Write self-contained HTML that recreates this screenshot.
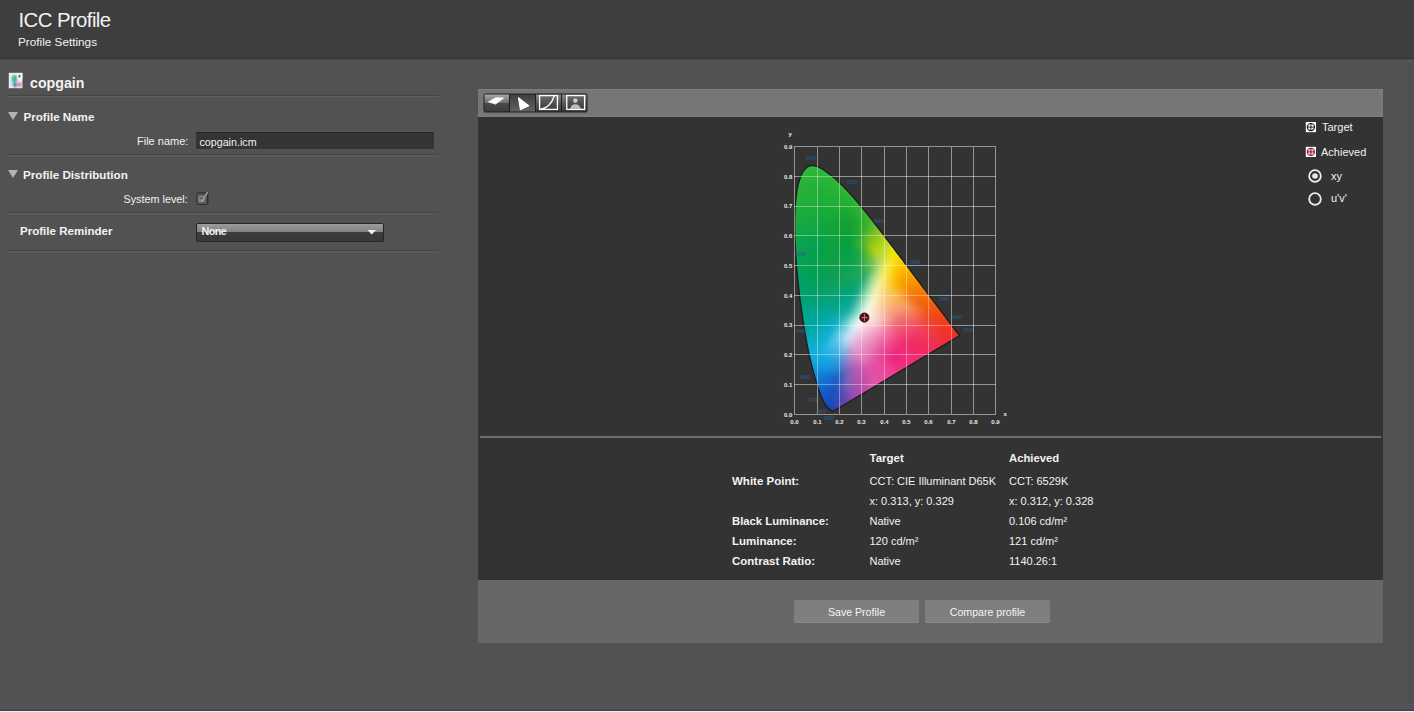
<!DOCTYPE html>
<html><head><meta charset="utf-8">
<style>
*{margin:0;padding:0;box-sizing:border-box}
html,body{width:1414px;height:712px;overflow:hidden;background:#525252;font-family:"Liberation Sans",sans-serif;color:#f2f2f2}
.a{position:absolute;white-space:nowrap;line-height:1}
.b{font-weight:bold}
#hdr{position:absolute;left:0;top:0;width:1414px;height:59px;background:#3e3e3e;border-bottom:2px solid #3a3a3a}
#band{position:absolute;left:0;top:59px;width:1414px;height:3px;background:#545454;border-top:1px solid #4a4a4a}
.sep{position:absolute;left:8px;width:431px;height:2px;border-top:1px solid #444;border-bottom:1px solid #5f5f5f}
.tri{position:absolute;width:0;height:0;border-left:5px solid transparent;border-right:5px solid transparent;border-top:8px solid #b4b4b4}
#panel{position:absolute;left:478px;top:89px;width:905px;height:554px;background:#333}
#tbar{position:absolute;left:478px;top:89px;width:905px;height:28px;background:#767676;box-shadow:inset 0 1px 0 #7e7e7e,inset 0 -2px 0 #7c7c7c,inset -3px 0 0 #7a7a7a}
#bot{position:absolute;left:478px;top:580px;width:905px;height:63px;background:#676767}
.btn{position:absolute;top:600px;height:23px;width:125px;background:#7f7f7f;border-radius:2px;font-size:10.6px;color:#f4f4f4;text-align:center;line-height:25px;border-bottom:1px solid #8a8a8a}
#cie i{position:absolute;display:block;height:1px}
</style></head><body>
<div id="hdr"></div><div id="band"></div>
<div class="a" style="left:18.5px;top:9.8px;font-size:20.4px;letter-spacing:-0.6px">ICC Profile</div>
<div class="a" style="left:18px;top:36.3px;font-size:11.75px">Profile Settings</div>

<!-- left panel -->
<div class="a b" style="left:30px;top:76px;font-size:14.2px">copgain</div>
<div class="sep" style="top:95px"></div>
<div class="tri" style="left:8px;top:112px"></div>
<div class="a b" style="left:23.5px;top:110.6px;font-size:11.6px">Profile Name</div>
<div class="a" style="left:137px;top:136.4px;font-size:11px">File name:</div>
<div style="position:absolute;left:196px;top:132px;width:238px;height:17px;background:#343434;border-radius:1px;border-top:1px solid #262626"></div>
<div class="a" style="left:199.5px;top:136.6px;font-size:10.7px">copgain.icm</div>
<div class="sep" style="top:154px"></div>
<div class="tri" style="left:8px;top:170px"></div>
<div class="a b" style="left:23px;top:169.1px;font-size:11.65px">Profile Distribution</div>
<div class="a" style="left:123.5px;top:193.9px;font-size:10.8px">System level:</div>
<div style="position:absolute;left:197px;top:192px;width:12px;height:13px;background:#444;border-radius:2px"></div>
<div class="sep" style="top:212px"></div>
<div class="a b" style="left:20px;top:225.8px;font-size:11.55px">Profile Reminder</div>
<div style="position:absolute;left:196px;top:223px;width:188px;height:19px;border-radius:2px;background:linear-gradient(#9c9c9c,#828282 46%,#3c3c3c 46%,#383838);border:1px solid #262626"></div>
<div class="a b" style="left:201.5px;top:225.8px;font-size:10.8px;letter-spacing:-0.55px">None</div>
<div class="sep" style="top:250px"></div>

<div style="position:absolute;left:1408px;top:62px;width:6px;height:650px;background:#4f5056"></div>
<div style="position:absolute;left:0;top:704px;width:1414px;height:8px;background:linear-gradient(#55565b 0 1px,#4a4b50 1px 2px,#56575c 2px 3px,#4c4d52 3px 4px,#5a5b60 4px 5px,#46474c 5px 7px,#eeeef2 7px 8px)"></div>

<!-- right panel -->
<div id="panel"></div>
<div id="tbar"></div>
<div style="position:absolute;left:480px;top:436px;width:901px;height:2px;background:#6c6c6c"></div>
<div id="bot"></div>
<div class="btn" style="left:794px">Save Profile</div>
<div class="btn" style="left:925px">Compare profile</div>

<!-- table -->
<div class="a b" style="left:869.5px;top:453.4px;font-size:11.5px">Target</div>
<div class="a b" style="left:1009px;top:453.4px;font-size:11.3px">Achieved</div>
<div class="a b" style="left:732px;top:476.3px;font-size:11.5px">White Point:</div>
<div class="a" style="left:869.5px;top:475.7px;font-size:11px">CCT: CIE Illuminant D65K</div>
<div class="a" style="left:1009px;top:475.7px;font-size:11px">CCT: 6529K</div>
<div class="a" style="left:869.5px;top:495.7px;font-size:11px">x: 0.313, y: 0.329</div>
<div class="a" style="left:1009px;top:495.7px;font-size:11px">x: 0.312, y: 0.328</div>
<div class="a b" style="left:732px;top:516.2px;font-size:11.3px">Black Luminance:</div>
<div class="a" style="left:869.5px;top:515.7px;font-size:11px">Native</div>
<div class="a" style="left:1009px;top:515.7px;font-size:11px">0.106 cd/m²</div>
<div class="a b" style="left:732px;top:536.4px;font-size:11.5px">Luminance:</div>
<div class="a" style="left:869.5px;top:535.7px;font-size:11px">120 cd/m²</div>
<div class="a" style="left:1009px;top:535.7px;font-size:11px">121 cd/m²</div>
<div class="a b" style="left:732px;top:556.2px;font-size:11.5px">Contrast Ratio:</div>
<div class="a" style="left:869.5px;top:555.7px;font-size:11px">Native</div>
<div class="a" style="left:1009px;top:555.7px;font-size:11px">1140.26:1</div>

<!-- legend -->
<div class="a" style="left:1322px;top:122px;font-size:11px">Target</div>
<div class="a" style="left:1321px;top:147px;font-size:11px">Achieved</div>
<div class="a" style="left:1331px;top:171px;font-size:11px">xy</div>
<div class="a" style="left:1331px;top:193px;font-size:11px">u'v'</div>


<!--ICONS-->
<svg style="position:absolute;left:0;top:0" width="1414" height="712">
<defs>
<linearGradient id="doc" x1="0" y1="0" x2="1" y2="1"><stop offset="0" stop-color="#b0f0c8"/><stop offset="0.45" stop-color="#40c0a0"/><stop offset="0.7" stop-color="#3070c0"/><stop offset="1" stop-color="#f0a0d0"/></linearGradient>
<linearGradient id="tb1" x1="0" y1="0" x2="0" y2="1"><stop offset="0" stop-color="#a8a8a8"/><stop offset="0.5" stop-color="#6c6c6c"/><stop offset="0.5" stop-color="#4a4a4a"/><stop offset="1" stop-color="#3c3c3c"/></linearGradient>
<linearGradient id="tb2" x1="0" y1="0" x2="0" y2="1"><stop offset="0" stop-color="#3e3e3e"/><stop offset="1" stop-color="#606060"/></linearGradient>
<linearGradient id="tb3" x1="0" y1="0" x2="0" y2="1"><stop offset="0" stop-color="#8a8a8a"/><stop offset="0.5" stop-color="#5a5a5a"/><stop offset="1" stop-color="#3a3a3a"/></linearGradient>
<linearGradient id="in3" x1="0" y1="0" x2="0" y2="1"><stop offset="0" stop-color="#6a6a6a"/><stop offset="1" stop-color="#3a3a3a"/></linearGradient>
</defs>
<!-- doc icon -->
<filter id="bl" x="-50%" y="-50%" width="200%" height="200%"><feGaussianBlur stdDeviation="1.2"/></filter>
<rect x="8.8" y="72.8" width="13.6" height="15.4" fill="#f2f2f2"/>
<g filter="url(#bl)">
<ellipse cx="14.5" cy="79" rx="3" ry="4" fill="#40c080"/>
<ellipse cx="15" cy="85" rx="2" ry="2.2" fill="#3070c0"/>
<ellipse cx="19.5" cy="84.5" rx="2.2" ry="2.5" fill="#e070b0"/>
<ellipse cx="11.5" cy="83.5" rx="1.5" ry="2.5" fill="#b0e0f0"/>
</g>
<path d="M17.2 73 L22.4 73 L22.4 79.2 L17.2 79.2 Z" fill="#f6f6f6"/>
<path d="M18 76.2 L20.8 76.2 M19.4 74.5 L19.4 78" stroke="#606060" stroke-width="0.9"/>
<!-- toolbar group -->
<rect x="483.5" y="93.5" width="104" height="19" rx="2" fill="#1e1e1e"/>
<rect x="484.5" y="94.5" width="24.5" height="17" fill="url(#tb1)"/>
<rect x="510" y="94.5" width="25" height="17" fill="url(#tb2)"/>
<rect x="536" y="94.5" width="25" height="17" fill="url(#tb3)"/>
<rect x="562" y="94.5" width="24.5" height="17" fill="url(#tb3)"/>
<path d="M488.5 101.9 L495.8 97.7 L503.6 98.1 L495.6 104.1 Z" fill="#fff" stroke="#fff" stroke-width="0.8" stroke-linejoin="round"/>
<path d="M518.4 97.5 L529.1 105.8 L520.4 109.8 Z" fill="#fff" stroke="#fff" stroke-width="1" stroke-linejoin="round"/>
<rect x="539.6" y="95.6" width="17.8" height="13.8" fill="url(#in3)" stroke="#fff" stroke-width="1.3"/>
<path d="M540 109.3 Q550 108.5 554.5 95.5" stroke="#fff" stroke-width="1.3" fill="none"/>
<rect x="566.8" y="95.6" width="17.8" height="13.8" fill="url(#in3)" stroke="#fff" stroke-width="1.3"/>
<circle cx="575.3" cy="100.6" r="2.3" fill="#c8c8c8"/>
<path d="M570 109 Q571 104.5 575.3 104.3 Q579.6 104.5 581 109 Z" fill="#bdbdbd"/>
<!-- legend icons -->
<rect x="1305.8" y="122" width="10.2" height="10.2" fill="#fff"/>
<circle cx="1310.9" cy="127.1" r="3.6" fill="#fff" stroke="#111" stroke-width="1.1"/>
<path d="M1310.9 123.4 V130.8 M1307.2 127.1 H1314.6" stroke="#111" stroke-width="0.9"/>
<rect x="1305.8" y="146.8" width="10.2" height="10.2" fill="#fff"/>
<circle cx="1310.9" cy="151.9" r="3.6" fill="#f4c8d8" stroke="#901830" stroke-width="1.1"/>
<path d="M1310.9 148.2 V155.6 M1307.2 151.9 H1314.6" stroke="#801028" stroke-width="0.9"/>
<!-- radios -->
<circle cx="1315" cy="176" r="5.8" fill="none" stroke="#eee" stroke-width="1.8"/>
<circle cx="1315" cy="176" r="2.8" fill="#e8e8e8"/>
<circle cx="1315" cy="199" r="5.8" fill="none" stroke="#eee" stroke-width="1.8"/>
<!-- checkbox -->
<rect x="196.8" y="193.2" width="10.6" height="11.2" rx="1" fill="#5c5c5c" stroke="#2c2c2c" stroke-width="1"/>
<circle cx="201.5" cy="199" r="2.6" fill="none" stroke="#8c8c8c" stroke-width="1.2"/>
<path d="M200.5 199.5 L202.5 201 L207.6 192.2" stroke="#a0a0a0" stroke-width="1.5" fill="none"/>
<!-- dropdown arrow -->
<path d="M367.5 230 L376 230 L371.75 234.5 Z" fill="#f0f0f0"/>
</svg>
<!--/ICONS-->
<!--CHART--><svg style="position:absolute;left:0;top:0" width="1414" height="712">
<path d="M833.36 410.58 L833.34 410.58 L833.29 410.61 L833.25 410.61 L833.18 410.64 L833.11 410.64 L833.02 410.64 L832.91 410.64 L832.76 410.55 L832.51 410.34 L832.20 410.35 L831.75 410.18 L831.19 409.83 L830.46 409.30 L829.45 408.44 L828.20 407.25 L826.64 405.47 L826.30 404.99 L825.94 404.46 L825.56 403.86 L825.17 403.19 L824.74 402.43 L824.29 401.58 L823.81 400.63 L823.30 399.57 L822.76 398.40 L822.20 397.11 L821.61 395.70 L820.99 394.14 L820.34 392.44 L819.67 390.56 L818.96 388.49 L818.22 386.21 L817.45 383.72 L816.64 381.00 L815.78 378.04 L814.88 374.84 L813.93 371.36 L812.94 367.62 L811.92 363.59 L810.88 359.26 L809.83 354.61 L808.79 349.64 L807.75 344.35 L806.71 338.74 L805.67 332.81 L804.63 326.57 L803.60 320.02 L802.59 313.20 L801.60 306.16 L800.65 298.93 L799.75 291.56 L798.91 284.10 L798.14 276.58 L797.45 269.06 L796.84 261.58 L796.33 254.18 L795.92 246.91 L795.61 239.79 L795.41 232.84 L795.33 226.09 L795.37 219.56 L795.54 213.27 L795.85 207.26 L796.30 201.55 L796.88 196.18 L797.60 191.19 L798.47 186.61 L799.47 182.45 L800.60 178.76 L801.84 175.53 L803.18 172.81 L804.62 170.60 L806.14 168.88 L807.74 167.61 L809.39 166.77 L811.08 166.33 L812.82 166.24 L814.58 166.47 L816.37 166.97 L818.17 167.69 L819.99 168.59 L821.81 169.62 L823.64 170.76 L825.45 171.98 L827.25 173.28 L829.03 174.63 L830.78 176.00 L832.50 177.42 L834.21 178.86 L835.89 180.34 L837.56 181.85 L839.21 183.40 L840.85 184.99 L842.49 186.62 L844.12 188.28 L845.75 189.97 L847.37 191.70 L848.99 193.45 L850.61 195.24 L852.22 197.05 L853.83 198.89 L855.43 200.76 L857.03 202.64 L858.63 204.54 L860.22 206.47 L861.82 208.41 L863.41 210.37 L865.00 212.34 L866.60 214.33 L868.19 216.33 L869.79 218.34 L871.38 220.37 L872.98 222.41 L874.58 224.45 L876.18 226.51 L877.78 228.57 L879.37 230.64 L880.96 232.72 L882.55 234.79 L884.14 236.87 L885.72 238.95 L887.31 241.03 L888.89 243.11 L890.47 245.19 L892.05 247.26 L893.62 249.33 L895.19 251.40 L896.74 253.46 L898.29 255.51 L899.84 257.56 L901.37 259.59 L902.89 261.62 L904.41 263.63 L905.91 265.63 L907.41 267.61 L908.89 269.59 L910.36 271.54 L911.82 273.48 L913.26 275.39 L914.69 277.29 L916.10 279.16 L917.49 281.01 L918.87 282.83 L920.23 284.63 L921.57 286.40 L922.88 288.14 L924.18 289.86 L925.45 291.55 L926.69 293.21 L927.89 294.82 L929.07 296.38 L930.20 297.89 L931.31 299.36 L932.38 300.78 L933.43 302.16 L934.45 303.52 L935.45 304.85 L936.42 306.14 L937.37 307.40 L938.29 308.62 L939.18 309.79 L940.03 310.92 L940.85 311.99 L941.63 313.02 L942.38 314.01 L943.11 314.97 L943.80 315.89 L944.47 316.77 L945.10 317.62 L945.71 318.44 L946.30 319.22 L946.86 319.97 L947.39 320.68 L947.89 321.35 L948.38 322.00 L948.84 322.61 L949.29 323.20 L949.71 323.76 L950.12 324.29 L950.50 324.80 L950.87 325.29 L951.23 325.76 L951.57 326.21 L951.89 326.64 L952.20 327.06 L952.50 327.46 L952.79 327.85 L953.08 328.22 L953.35 328.59 L953.61 328.94 L953.86 329.27 L954.11 329.60 L954.34 329.91 L954.56 330.21 L954.78 330.49 L954.98 330.76 L955.87 331.92 L956.54 332.81 L957.06 333.50 L957.44 334.00 L957.68 334.33 L957.88 334.60 L958.04 334.80 L958.19 335.01 L958.33 335.19 L958.42 335.31 L958.46 335.37 L958.49 335.40 Z" fill="#1b1b1b" stroke="#1b1b1b" stroke-width="2.4" stroke-linejoin="round"/>
<g stroke="#ffffff" stroke-opacity="0.48" stroke-width="1" shape-rendering="crispEdges"><line x1="794.50" y1="146.64" x2="794.50" y2="414.30"/><line x1="794" y1="414.30" x2="996" y2="414.30"/><line x1="817.50" y1="146.64" x2="817.50" y2="414.30"/><line x1="794" y1="384.56" x2="996" y2="384.56"/><line x1="839.50" y1="146.64" x2="839.50" y2="414.30"/><line x1="794" y1="354.82" x2="996" y2="354.82"/><line x1="861.50" y1="146.64" x2="861.50" y2="414.30"/><line x1="794" y1="325.08" x2="996" y2="325.08"/><line x1="884.50" y1="146.64" x2="884.50" y2="414.30"/><line x1="794" y1="295.34" x2="996" y2="295.34"/><line x1="906.50" y1="146.64" x2="906.50" y2="414.30"/><line x1="794" y1="265.60" x2="996" y2="265.60"/><line x1="928.50" y1="146.64" x2="928.50" y2="414.30"/><line x1="794" y1="235.86" x2="996" y2="235.86"/><line x1="951.50" y1="146.64" x2="951.50" y2="414.30"/><line x1="794" y1="206.12" x2="996" y2="206.12"/><line x1="973.50" y1="146.64" x2="973.50" y2="414.30"/><line x1="794" y1="176.38" x2="996" y2="176.38"/><line x1="995.50" y1="146.64" x2="995.50" y2="414.30"/><line x1="794" y1="146.64" x2="996" y2="146.64"/></g>
</svg>
<div id="cie" style="position:absolute;left:780px;top:150px;width:230px;height:280px;clip-path:path('M53.36 260.58 L53.34 260.58 L53.29 260.61 L53.25 260.61 L53.18 260.64 L53.11 260.64 L53.02 260.64 L52.91 260.64 L52.76 260.55 L52.51 260.34 L52.20 260.35 L51.75 260.18 L51.19 259.83 L50.46 259.30 L49.45 258.44 L48.20 257.25 L46.64 255.47 L46.30 254.99 L45.94 254.46 L45.56 253.86 L45.17 253.19 L44.74 252.43 L44.29 251.58 L43.81 250.63 L43.30 249.57 L42.76 248.40 L42.20 247.11 L41.61 245.70 L40.99 244.14 L40.34 242.44 L39.67 240.56 L38.96 238.49 L38.22 236.21 L37.45 233.72 L36.64 231.00 L35.78 228.04 L34.88 224.84 L33.93 221.36 L32.94 217.62 L31.92 213.59 L30.88 209.26 L29.83 204.61 L28.79 199.64 L27.75 194.35 L26.71 188.74 L25.67 182.81 L24.63 176.57 L23.60 170.02 L22.59 163.20 L21.60 156.16 L20.65 148.93 L19.75 141.56 L18.91 134.10 L18.14 126.58 L17.45 119.06 L16.84 111.58 L16.33 104.18 L15.92 96.91 L15.61 89.79 L15.41 82.84 L15.33 76.09 L15.37 69.56 L15.54 63.27 L15.85 57.26 L16.30 51.55 L16.88 46.18 L17.60 41.19 L18.47 36.61 L19.47 32.45 L20.60 28.76 L21.84 25.53 L23.18 22.81 L24.62 20.60 L26.14 18.88 L27.74 17.61 L29.39 16.77 L31.08 16.33 L32.82 16.24 L34.58 16.47 L36.37 16.97 L38.17 17.69 L39.99 18.59 L41.81 19.62 L43.64 20.76 L45.45 21.98 L47.25 23.28 L49.03 24.63 L50.78 26.00 L52.50 27.42 L54.21 28.86 L55.89 30.34 L57.56 31.85 L59.21 33.40 L60.85 34.99 L62.49 36.62 L64.12 38.28 L65.75 39.97 L67.37 41.70 L68.99 43.45 L70.61 45.24 L72.22 47.05 L73.83 48.89 L75.43 50.76 L77.03 52.64 L78.63 54.54 L80.22 56.47 L81.82 58.41 L83.41 60.37 L85.00 62.34 L86.60 64.33 L88.19 66.33 L89.79 68.34 L91.38 70.37 L92.98 72.41 L94.58 74.45 L96.18 76.51 L97.78 78.57 L99.37 80.64 L100.96 82.72 L102.55 84.79 L104.14 86.87 L105.72 88.95 L107.31 91.03 L108.89 93.11 L110.47 95.19 L112.05 97.26 L113.62 99.33 L115.19 101.40 L116.74 103.46 L118.29 105.51 L119.84 107.56 L121.37 109.59 L122.89 111.62 L124.41 113.63 L125.91 115.63 L127.41 117.61 L128.89 119.59 L130.36 121.54 L131.82 123.48 L133.26 125.39 L134.69 127.29 L136.10 129.16 L137.49 131.01 L138.87 132.83 L140.23 134.63 L141.57 136.40 L142.88 138.14 L144.18 139.86 L145.45 141.55 L146.69 143.21 L147.89 144.82 L149.07 146.38 L150.20 147.89 L151.31 149.36 L152.38 150.78 L153.43 152.16 L154.45 153.52 L155.45 154.85 L156.42 156.14 L157.37 157.40 L158.29 158.62 L159.18 159.79 L160.03 160.92 L160.85 161.99 L161.63 163.02 L162.38 164.01 L163.11 164.97 L163.80 165.89 L164.47 166.77 L165.10 167.62 L165.71 168.44 L166.30 169.22 L166.86 169.97 L167.39 170.68 L167.89 171.35 L168.38 172.00 L168.84 172.61 L169.29 173.20 L169.71 173.76 L170.12 174.29 L170.50 174.80 L170.87 175.29 L171.23 175.76 L171.57 176.21 L171.89 176.64 L172.20 177.06 L172.50 177.46 L172.79 177.85 L173.08 178.22 L173.35 178.59 L173.61 178.94 L173.86 179.27 L174.11 179.60 L174.34 179.91 L174.56 180.21 L174.78 180.49 L174.98 180.76 L175.87 181.92 L176.54 182.81 L177.06 183.50 L177.44 184.00 L177.68 184.33 L177.88 184.60 L178.04 184.80 L178.19 185.01 L178.33 185.19 L178.42 185.31 L178.46 185.37 L178.49 185.40 Z')"><i style="left:27px;top:16px;width:11px;background:linear-gradient(90deg,#2fb738,#2fb838,#2fb838,#2fb838,#2fb838)"></i><i style="left:26px;top:17px;width:14px;background:linear-gradient(90deg,#2fb738,#2fb738,#2fb738,#2fb738,#2fb838,#2fb838)"></i><i style="left:25px;top:18px;width:17px;background:linear-gradient(90deg,#2fb738,#2fb738,#2fb738,#2eb738,#2fb738,#2fb738,#2fb838)"></i><i style="left:24px;top:19px;width:20px;background:linear-gradient(90deg,#2eb738,#2eb738,#2eb738,#2eb738,#2eb738,#2eb738,#2fb738,#2fb738)"></i><i style="left:23px;top:20px;width:22px;background:linear-gradient(90deg,#2eb638,#2eb638,#2eb738,#2db738,#2db738,#2eb738,#2eb738,#2fb738)"></i><i style="left:22px;top:21px;width:25px;background:linear-gradient(90deg,#2eb638,#2eb638,#2db638,#2db638,#2db638,#2db638,#2db738,#2eb738,#2fb737)"></i><i style="left:22px;top:22px;width:26px;background:linear-gradient(90deg,#2eb638,#2db638,#2db638,#2cb638,#2cb638,#2cb638,#2cb638,#2db738,#2eb738,#2eb737)"></i><i style="left:21px;top:23px;width:29px;background:linear-gradient(90deg,#2db639,#2db638,#2db638,#2cb638,#2cb638,#2bb638,#2cb638,#2cb638,#2db738,#2eb738,#2eb737)"></i><i style="left:21px;top:24px;width:30px;background:linear-gradient(90deg,#2db539,#2cb538,#2cb538,#2bb538,#2bb538,#2bb538,#2bb638,#2cb638,#2db638,#2eb738,#2eb737)"></i><i style="left:20px;top:25px;width:32px;background:linear-gradient(90deg,#2db539,#2cb539,#2cb538,#2bb538,#2bb538,#2ab538,#2ab538,#2bb538,#2bb638,#2db638,#2eb738,#2eb737)"></i><i style="left:20px;top:26px;width:33px;background:linear-gradient(90deg,#2cb539,#2cb439,#2bb538,#2ab538,#2ab538,#2ab538,#2ab538,#2ab538,#2bb638,#2cb638,#2eb738,#2eb737)"></i><i style="left:19px;top:27px;width:36px;background:linear-gradient(90deg,#2cb439,#2bb439,#2bb439,#2ab438,#2ab438,#29b438,#29b438,#29b538,#2ab538,#2bb638,#2db638,#2eb738,#2fb737)"></i><i style="left:19px;top:28px;width:37px;background:linear-gradient(90deg,#2cb439,#2bb439,#2ab439,#29b438,#29b438,#28b438,#28b438,#29b438,#2ab538,#2bb638,#2db638,#2eb738,#2fb738)"></i><i style="left:19px;top:29px;width:38px;background:linear-gradient(90deg,#2bb439,#2ab339,#2ab339,#29b439,#28b438,#28b438,#28b438,#28b438,#29b438,#2ab538,#2bb638,#2db638,#2eb738,#2fb738)"></i><i style="left:18px;top:30px;width:40px;background:linear-gradient(90deg,#2bb339,#2ab339,#29b339,#29b339,#28b338,#27b338,#27b338,#27b438,#28b438,#29b538,#2bb538,#2cb638,#2eb738,#2fb738)"></i><i style="left:18px;top:31px;width:41px;background:linear-gradient(90deg,#2bb339,#2ab239,#29b239,#28b339,#28b338,#27b338,#27b338,#26b338,#27b338,#28b438,#29b538,#2bb538,#2cb638,#2eb738,#2eb737)"></i><i style="left:18px;top:32px;width:42px;background:linear-gradient(90deg,#2bb339,#29b239,#28b239,#28b239,#27b239,#26b338,#26b338,#26b338,#26b338,#28b438,#29b538,#2bb538,#2cb638,#2eb738,#2eb737)"></i><i style="left:18px;top:33px;width:43px;background:linear-gradient(90deg,#2ab239,#29b239,#28b139,#27b239,#26b239,#26b238,#25b238,#25b338,#26b338,#27b438,#29b438,#2bb538,#2cb638,#2eb738,#2eb637)"></i><i style="left:17px;top:34px;width:45px;background:linear-gradient(90deg,#2ab239,#29b13a,#28b139,#27b139,#26b239,#25b238,#25b238,#25b238,#25b238,#26b338,#27b438,#29b438,#2bb538,#2cb638,#2eb637,#2eb637)"></i><i style="left:17px;top:35px;width:46px;background:linear-gradient(90deg,#2ab23a,#29b13a,#27b13a,#26b139,#26b139,#25b139,#24b238,#24b238,#24b238,#26b338,#27b438,#29b438,#2ab538,#2cb637,#2db637,#2eb637)"></i><i style="left:17px;top:36px;width:47px;background:linear-gradient(90deg,#29b23a,#28b13a,#27b03a,#26b139,#25b139,#25b139,#24b138,#23b138,#23b238,#24b238,#26b338,#27b438,#29b438,#2bb537,#2cb637,#2db637,#2eb637)"></i><i style="left:17px;top:37px;width:48px;background:linear-gradient(90deg,#29b13a,#28b13a,#27b03a,#26b039,#25b039,#24b139,#23b138,#23b138,#23b138,#24b238,#25b338,#27b338,#29b437,#2ab537,#2cb536,#2db636,#2eb636)"></i><i style="left:17px;top:38px;width:49px;background:linear-gradient(90deg,#29b13a,#28b03a,#26b03a,#25b039,#25b039,#24b039,#23b138,#22b138,#22b138,#24b238,#25b238,#27b337,#28b437,#2ab436,#2cb536,#2db536,#2eb536)"></i><i style="left:16px;top:39px;width:51px;background:linear-gradient(90deg,#29b13a,#28b03a,#27b03a,#26b03a,#25b039,#24b039,#23b039,#22b038,#22b138,#22b138,#24b237,#25b237,#27b337,#28b336,#2ab436,#2cb435,#2db536,#2eb536)"></i><i style="left:16px;top:40px;width:52px;background:linear-gradient(90deg,#29b13a,#28b03a,#26b03a,#25b03a,#24b039,#23b039,#22b039,#22b038,#21b038,#22b138,#23b137,#25b237,#27b236,#28b335,#2ab335,#2bb435,#2db535,#2eb536)"></i><i style="left:16px;top:41px;width:53px;background:linear-gradient(90deg,#29b13a,#28b03a,#26b03a,#25b03a,#24b039,#23b039,#22b039,#21b038,#21b038,#21b038,#22b137,#24b137,#25b236,#27b235,#28b235,#2ab334,#2cb434,#2db535,#2eb536)"></i><i style="left:16px;top:42px;width:54px;background:linear-gradient(90deg,#28b13a,#27b03a,#26b03a,#25b03a,#24b039,#23b039,#22b039,#21b038,#20b038,#21b038,#22b037,#23b136,#25b135,#26b235,#28b234,#2ab334,#2bb434,#2db535,#2eb536)"></i><i style="left:16px;top:43px;width:55px;background:linear-gradient(90deg,#28b03a,#27b03a,#26b03a,#25b03a,#24b039,#23b039,#21b039,#20b039,#20b038,#20b038,#22b037,#23b036,#25b135,#26b134,#28b233,#29b233,#2bb334,#2db535,#2eb636)"></i><i style="left:16px;top:44px;width:56px;background:linear-gradient(90deg,#28b03a,#27b03a,#26b03a,#25b03a,#24b039,#22af39,#21af39,#20af39,#1faf39,#1faf38,#21b037,#22b036,#23b035,#25b034,#26b133,#28b133,#2ab233,#2bb334,#2db535,#2eb636)"></i><i style="left:15px;top:45px;width:58px;background:linear-gradient(90deg,#28b03a,#27b03a,#26b03a,#25b03a,#23af39,#22af39,#21af39,#20af39,#1faf39,#1faf38,#20af37,#22af36,#23b035,#24b034,#26b033,#28b132,#29b232,#2bb334,#2db535,#2fb636)"></i><i style="left:15px;top:46px;width:59px;background:linear-gradient(90deg,#27b03a,#27b03a,#26af3a,#24af3a,#23af39,#22af39,#21af39,#1faf39,#1faf39,#1eaf39,#1faf38,#20af37,#22af36,#23b034,#25b033,#26b032,#28b132,#29b232,#2bb434,#2db535,#2fb636)"></i><i style="left:15px;top:47px;width:60px;background:linear-gradient(90deg,#27b03a,#26af3a,#25af3a,#24af3a,#23af39,#21af39,#20af39,#1faf39,#1eaf39,#1eaf39,#1faf38,#20af37,#22af35,#23af34,#25b033,#26b032,#27b032,#29b232,#2bb334,#2db535,#30b636)"></i><i style="left:15px;top:48px;width:60px;background:linear-gradient(90deg,#27af3b,#26af3a,#25af3a,#23af3a,#22af39,#21af39,#20ae39,#1eae39,#1dae39,#1dae39,#1eae38,#20af37,#21af36,#23af34,#24af33,#25af32,#27b031,#28b132,#2bb333,#2db535,#2fb636)"></i><i style="left:15px;top:49px;width:61px;background:linear-gradient(90deg,#27af3b,#26af3a,#24af3a,#23af3a,#21ae39,#20ae39,#1fae39,#1eae3a,#1dae3a,#1dae39,#1eae38,#20ae37,#21af36,#22af34,#24af33,#25af32,#26af31,#28b132,#2ab334,#2db535,#30b636)"></i><i style="left:15px;top:50px;width:62px;background:linear-gradient(90deg,#26af3b,#25af3a,#24af3a,#22ae3a,#21ae39,#20ae39,#1fae39,#1eae3a,#1dae3a,#1cae3a,#1dae39,#1fae38,#20ae36,#21af35,#23af34,#24af33,#25af32,#26af31,#28b132,#2bb334,#2db536,#30b636)"></i><i style="left:15px;top:51px;width:63px;background:linear-gradient(90deg,#26af3b,#25af3a,#23ae3a,#22ae3a,#20ae39,#1fae39,#1eae3a,#1dae3a,#1cae3a,#1cae3a,#1dae39,#1eae38,#20ae36,#21ae35,#22ae34,#23ae33,#24ae31,#26af31,#28b133,#2bb334,#2db536,#31b636)"></i><i style="left:15px;top:52px;width:64px;background:linear-gradient(90deg,#25af3b,#24ae3a,#23ae3a,#21ae3a,#20ae3a,#1fae3a,#1dad3a,#1cad3a,#1cad3a,#1cad3a,#1dae39,#1eae38,#20ae36,#21ae35,#22ae34,#23ae32,#24ae31,#25af32,#28b133,#2ab335,#2eb536,#32b535)"></i><i style="left:15px;top:53px;width:65px;background:linear-gradient(90deg,#25ae3b,#23ae3a,#22ae3a,#21ae3a,#1fad3a,#1ead3a,#1dad3a,#1cad3a,#1bad3b,#1bad3a,#1cad39,#1dad38,#1fae37,#20ae36,#21ae35,#22ae33,#22ad32,#23ad31,#25af32,#28b134,#2bb335,#2eb536,#33b535)"></i><i style="left:15px;top:54px;width:65px;background:linear-gradient(90deg,#24ae3b,#23ae3a,#21ad3a,#20ad3a,#1fad3a,#1ead3a,#1dad3a,#1cad3b,#1bad3b,#1bad3b,#1bad3a,#1dad39,#1ead37,#1fae36,#21ae35,#21ad33,#22ad32,#22ad31,#24ae32,#27b033,#2ab335,#2db436,#33b535)"></i><i style="left:14px;top:55px;width:67px;background:linear-gradient(90deg,#24ad3c,#23ad3b,#21ad3a,#20ad3a,#1fad3a,#1ead3a,#1cad3b,#1bad3b,#1aad3b,#1aad3b,#1bad3a,#1cad39,#1ead38,#1fad36,#20ad35,#21ad33,#21ac32,#22ac31,#24ae32,#26b034,#2ab235,#2eb436,#34b535)"></i><i style="left:14px;top:56px;width:68px;background:linear-gradient(90deg,#23ad3d,#22ad3b,#21ad3a,#20ad3a,#1ead3a,#1dad3a,#1cad3b,#1bac3b,#1aac3b,#1aac3b,#1aad3a,#1bad39,#1dad38,#1ead37,#1fad36,#20ad34,#20ac33,#20ab31,#22ac31,#24ae33,#27b034,#2ab335,#2fb435,#36b534)"></i><i style="left:14px;top:57px;width:69px;background:linear-gradient(90deg,#22ad3d,#22ad3b,#20ad3a,#1fad3a,#1eac3a,#1dac3b,#1cac3b,#1aac3b,#19ac3b,#19ac3b,#1aac3b,#1bac39,#1cad38,#1ead37,#1fac35,#1fac34,#1fab32,#20ab31,#21ac32,#24ae33,#27b035,#2bb235,#30b435,#37b534)"></i><i style="left:14px;top:58px;width:70px;background:linear-gradient(90deg,#22ac3e,#21ac3c,#20ac3a,#1eac3a,#1dac3b,#1cac3b,#1bac3b,#1aac3c,#19ac3c,#19ac3c,#19ac3b,#1bac39,#1cac38,#1dac37,#1eac35,#1eab34,#1eab32,#1faa31,#21ac32,#23ae33,#27b035,#2bb235,#32b335,#39b433)"></i><i style="left:14px;top:59px;width:71px;background:linear-gradient(90deg,#21ac3e,#21ac3c,#1fac3b,#1eac3b,#1dac3b,#1cac3b,#1bac3b,#1aac3c,#19ac3c,#18ac3c,#19ac3b,#1aac3a,#1bac39,#1cac38,#1dac36,#1dab34,#1daa33,#1eaa31,#1faa31,#21ac32,#24ae34,#28b035,#2db235,#33b334,#3bb432)"></i><i style="left:14px;top:60px;width:71px;background:linear-gradient(90deg,#21ac3e,#20ac3c,#1fac3b,#1eac3b,#1cac3b,#1bac3b,#1aac3c,#19ac3c,#18ab3c,#18ab3c,#18ac3b,#19ac3a,#1bac39,#1cac38,#1cab36,#1cab35,#1caa33,#1da932,#1eaa31,#20ab32,#23ae34,#27af34,#2cb134,#33b234,#3bb432)"></i><i style="left:14px;top:61px;width:72px;background:linear-gradient(90deg,#21ac3f,#20ac3d,#1eac3b,#1dac3b,#1cab3b,#1bab3c,#1aab3c,#19ab3c,#18ab3c,#17ab3c,#18ab3c,#19ac3a,#1aac39,#1bab38,#1bab36,#1caa34,#1ca933,#1ca931,#1da931,#20ab33,#23ad34,#28af34,#2db134,#34b233,#3cb432)"></i><i style="left:14px;top:62px;width:73px;background:linear-gradient(90deg,#21ab3f,#1fab3d,#1eab3c,#1dab3c,#1bab3c,#1aab3c,#19ab3c,#18ab3c,#17ab3d,#17ab3c,#18ab3c,#19ab3a,#1aab39,#1aab37,#1baa36,#1ba934,#1ba832,#1ba831,#1da932,#20ab33,#23ad34,#29af34,#2eb034,#35b233,#3fb431)"></i><i style="left:14px;top:63px;width:74px;background:linear-gradient(90deg,#20ab3f,#1fab3e,#1dab3c,#1cab3c,#1bab3c,#1aab3c,#19ab3c,#18ab3d,#17ab3d,#16ab3d,#17ab3c,#18ab3b,#19ab3a,#1aab38,#1aaa37,#1aa935,#1aa833,#1aa832,#1ba831,#1da932,#20ab33,#25ad34,#2aaf33,#30b033,#37b232,#41b430)"></i><i style="left:14px;top:64px;width:75px;background:linear-gradient(90deg,#20ab3f,#1eab3e,#1dab3d,#1cab3d,#1bab3c,#19ab3c,#18ab3d,#17ab3d,#16ab3d,#16ab3d,#16ab3c,#18ab3b,#18ab3a,#19aa38,#19a936,#19a835,#19a733,#19a732,#1aa731,#1da932,#21ab33,#26ad33,#2bae33,#31b033,#39b231,#43b430)"></i><i style="left:14px;top:65px;width:75px;background:linear-gradient(90deg,#1fab40,#1eaa3f,#1daa3e,#1baa3d,#1aaa3d,#19aa3d,#18aa3d,#17aa3d,#16aa3d,#15aa3d,#16aa3c,#17aa3b,#18aa3a,#18a938,#18a936,#18a835,#18a733,#18a632,#19a731,#1ca832,#20aa33,#25ac33,#2aae33,#30b032,#38b231,#43b42f)"></i><i style="left:14px;top:66px;width:76px;background:linear-gradient(90deg,#1faa41,#1daa3f,#1caa3e,#1baa3e,#1aaa3d,#18aa3d,#17aa3d,#16aa3d,#15aa3e,#15aa3d,#16aa3d,#17aa3b,#17aa3a,#17a938,#17a836,#17a735,#17a633,#18a631,#19a631,#1ca832,#20aa33,#26ac32,#2bae32,#31b032,#3ab231,#46b42f)"></i><i style="left:14px;top:67px;width:77px;background:linear-gradient(90deg,#1eaa41,#1daa40,#1caa3f,#1baa3e,#19aa3e,#18aa3e,#17aa3e,#16aa3e,#15aa3e,#14aa3e,#15aa3d,#16aa3c,#16a93a,#16a939,#16a837,#16a735,#16a634,#17a532,#17a531,#19a631,#1da832,#22aa32,#27ac32,#2dae32,#33b031,#3db230,#49b52e)"></i><i style="left:14px;top:68px;width:78px;background:linear-gradient(90deg,#1da942,#1ca941,#1ba940,#1aaa3f,#19aa3f,#18aa3e,#16aa3e,#15aa3e,#14aa3e,#14aa3e,#14aa3d,#15a93c,#15a93a,#16a838,#16a737,#16a635,#16a533,#16a532,#17a531,#19a631,#1ea832,#23aa32,#28ac32,#2eaf31,#35b131,#40b32f,#4eb62d)"></i><i style="left:14px;top:69px;width:79px;background:linear-gradient(90deg,#1da943,#1ca941,#1ba941,#1aa940,#18a93f,#17a93f,#16a93e,#15a93e,#14a93e,#13a93e,#14a93d,#14a93c,#15a83a,#15a738,#15a637,#15a635,#15a533,#15a432,#16a431,#19a631,#1ea832,#24aa31,#29ad31,#2faf31,#37b130,#44b42e,#53b72c)"></i><i style="left:14px;top:70px;width:79px;background:linear-gradient(90deg,#1ca943,#1ca942,#1aa941,#19a941,#18a940,#17a93f,#15a93f,#14a93f,#13a93f,#13a93e,#13a93d,#14a83c,#14a83a,#14a738,#14a637,#14a535,#14a433,#14a432,#15a431,#19a531,#1ea731,#23aa31,#29ac31,#2faf31,#37b130,#44b42e,#55b82c)"></i><i style="left:14px;top:71px;width:80px;background:linear-gradient(90deg,#1ca844,#1ba843,#1aa942,#19a941,#18a941,#16a940,#15a940,#14a93f,#13a93f,#12a93f,#13a93e,#13a83c,#13a73b,#13a739,#13a637,#13a536,#13a434,#13a332,#14a331,#16a431,#1aa631,#20a831,#25aa31,#2bad31,#32af30,#3cb22f,#4ab52d,#5bb92b)"></i><i style="left:14px;top:72px;width:81px;background:linear-gradient(90deg,#1ba844,#1ba844,#1aa843,#18a842,#17a841,#16a841,#15a940,#14a940,#12a93f,#12a93f,#12a83e,#12a83c,#12a73b,#12a639,#12a537,#12a435,#12a334,#12a332,#13a331,#16a431,#1ba631,#21a831,#27ab30,#2dae30,#35b030,#40b32f,#50b72c,#61bb2a)"></i><i style="left:14px;top:73px;width:82px;background:linear-gradient(90deg,#1ba845,#1aa844,#19a843,#18a843,#17a842,#15a841,#14a841,#13a840,#12a840,#11a83f,#11a83e,#12a73c,#12a63a,#12a539,#12a437,#12a435,#12a334,#12a232,#13a231,#17a431,#1ca631,#22a930,#28ab30,#2fae30,#39b12f,#46b42e,#57b92b,#68bd28)"></i><i style="left:14px;top:74px;width:82px;background:linear-gradient(90deg,#1ba845,#1aa845,#19a844,#17a843,#16a843,#15a842,#14a841,#12a841,#11a840,#11a83f,#11a73e,#11a73c,#11a63b,#11a539,#11a437,#11a335,#11a234,#11a232,#12a231,#16a331,#1ca631,#23a930,#29ab30,#30ae30,#3ab12f,#48b52e,#58b92b,#6abe28)"></i><i style="left:14px;top:75px;width:83px;background:linear-gradient(90deg,#1ba746,#1aa745,#18a745,#17a744,#16a743,#15a843,#13a842,#12a841,#11a841,#10a840,#10a73f,#11a73d,#11a63b,#11a53a,#11a438,#11a336,#11a235,#11a233,#11a132,#14a231,#19a431,#1fa731,#26aa30,#2dad30,#35af30,#41b32e,#4fb72c,#60bb2a,#71c027)"></i><i style="left:14px;top:76px;width:84px;background:linear-gradient(90deg,#1aa746,#19a746,#18a745,#17a744,#15a744,#14a743,#13a743,#12a742,#10a741,#10a740,#10a73f,#10a63d,#10a53b,#10a439,#10a438,#10a336,#10a234,#10a133,#11a132,#14a231,#1aa531,#21a831,#28aa31,#2fad30,#39b12f,#47b42e,#57b82b,#68bd28,#78c226)"></i><i style="left:14px;top:77px;width:85px;background:linear-gradient(90deg,#1aa746,#19a746,#17a746,#16a745,#15a744,#14a744,#12a743,#11a743,#10a742,#0fa741,#10a63f,#10a63d,#10a53b,#10a439,#10a338,#10a236,#10a134,#10a133,#11a132,#15a332,#1ca531,#23a831,#2aab31,#33ae30,#3fb22f,#4eb62c,#5eba2a,#6fbf27,#7ec424)"></i><i style="left:14px;top:78px;width:86px;background:linear-gradient(90deg,#19a747,#18a647,#17a646,#16a645,#14a745,#13a744,#12a744,#11a743,#0fa743,#0fa742,#10a640,#10a63e,#10a53c,#10a43a,#10a338,#10a237,#10a135,#10a134,#10a133,#12a232,#18a432,#1fa732,#26aa31,#2fad31,#39b02f,#48b42d,#57b82b,#68bd28,#77c226,#85c623)"></i><i style="left:14px;top:79px;width:86px;background:linear-gradient(90deg,#19a647,#18a647,#16a647,#15a646,#14a645,#13a645,#11a644,#10a644,#0fa643,#0ea642,#0fa640,#10a53e,#10a53c,#10a43a,#10a339,#10a237,#10a135,#0fa134,#0fa133,#12a233,#17a433,#1fa732,#26aa32,#2fad31,#3bb02f,#4bb52c,#5bb92a,#6bbe27,#7ac225,#88c722)"></i><i style="left:14px;top:80px;width:87px;background:linear-gradient(90deg,#18a648,#17a648,#16a647,#15a646,#13a646,#12a645,#11a645,#0fa645,#0ea644,#0ea643,#0fa640,#10a53e,#10a43c,#10a33a,#10a339,#10a237,#10a135,#0fa034,#0fa134,#12a234,#18a533,#20a833,#28ab32,#33ae31,#42b22e,#53b72b,#64bb28,#73c026,#81c524,#8ec921)"></i><i style="left:14px;top:81px;width:88px;background:linear-gradient(90deg,#17a549,#17a548,#15a547,#14a647,#13a646,#11a646,#10a645,#0ea645,#0da645,#0da643,#0fa540,#10a53e,#10a43c,#10a33a,#10a238,#10a137,#0fa135,#0ea035,#0ea135,#13a334,#19a534,#21a833,#2bac32,#39af30,#4ab42c,#5cb929,#6cbd27,#7bc224,#88c722,#95cb20)"></i><i style="left:14px;top:82px;width:89px;background:linear-gradient(90deg,#17a549,#16a549,#15a548,#14a547,#12a547,#11a547,#0fa546,#0ea546,#0da545,#0da544,#0ea541,#10a53f,#10a43d,#10a33b,#10a239,#10a138,#0fa136,#0ea035,#0da035,#10a235,#15a435,#1da734,#26aa33,#32ae31,#43b22e,#56b72a,#67bc27,#76c025,#83c523,#8fc921,#9bcd1f)"></i><i style="left:14px;top:83px;width:89px;background:linear-gradient(90deg,#16a44a,#16a549,#14a548,#13a548,#12a548,#10a547,#0fa547,#0da547,#0ca546,#0ca545,#0ea542,#10a43f,#10a43d,#10a33b,#10a239,#10a138,#0fa137,#0ea036,#0da036,#0fa236,#15a436,#1da735,#26aa34,#34ae31,#46b32d,#59b829,#6abc26,#79c124,#86c522,#92ca20,#9dce1e)"></i><i style="left:14px;top:84px;width:90px;background:linear-gradient(90deg,#16a44a,#15a44a,#14a449,#12a449,#11a548,#0fa548,#0ea548,#0ca547,#0ba547,#0ba545,#0ea542,#10a43f,#10a33d,#10a33b,#10a239,#10a138,#0fa037,#0da037,#0ca137,#0fa237,#16a536,#1ea835,#2aab33,#3bb030,#4fb52b,#62ba27,#73bf24,#80c323,#8cc821,#98cc1f,#a3cf1c)"></i><i style="left:14px;top:85px;width:91px;background:linear-gradient(90deg,#15a44b,#14a44a,#13a44a,#12a449,#10a449,#0fa449,#0da448,#0ba448,#0aa447,#0ba446,#0ea442,#10a43f,#10a33d,#10a23b,#10a139,#0fa138,#0ea037,#0ca037,#0ca137,#10a337,#17a537,#21a935,#30ad33,#43b22e,#58b729,#6bbc25,#7bc123,#87c521,#93ca20,#9ece1e,#a9d11b)"></i><i style="left:14px;top:86px;width:92px;background:linear-gradient(90deg,#15a44b,#14a44b,#13a44a,#11a44a,#10a44a,#0ea449,#0ca449,#0ba449,#0aa448,#0aa447,#0da443,#0fa440,#10a33e,#10a23c,#10a13a,#0fa139,#0ea038,#0ca038,#0ba038,#0da238,#13a438,#1ca737,#2aab34,#3cb030,#50b52b,#65ba27,#76bf23,#83c321,#8ec820,#99cc1e,#a4d01c,#afd319)"></i><i style="left:14px;top:87px;width:92px;background:linear-gradient(90deg,#15a34b,#14a34b,#12a34b,#10a34a,#0fa34a,#0da34a,#0ca34a,#0aa34a,#09a349,#09a447,#0ca444,#0fa340,#10a33e,#10a23c,#10a13a,#0fa139,#0ea039,#0ba039,#0aa039,#0ca239,#13a438,#1da837,#2cac34,#3fb02f,#54b62a,#68bb26,#79c022,#86c420,#91c81f,#9bcd1e,#a6d11b,#b1d418)"></i><i style="left:14px;top:88px;width:93px;background:linear-gradient(90deg,#14a34c,#13a34b,#11a34b,#10a34b,#0ea34b,#0da34b,#0ba34b,#09a34a,#08a34a,#09a348,#0ca344,#0fa340,#10a23e,#10a23c,#10a13a,#0fa039,#0da039,#0aa039,#09a13a,#0da239,#15a538,#21a936,#33ad32,#47b22e,#5cb829,#70bd24,#80c221,#8cc61f,#97ca1e,#a1cf1c,#acd21a,#b7d517)"></i><i style="left:14px;top:89px;width:94px;background:linear-gradient(90deg,#14a34c,#13a34c,#11a34c,#0fa34c,#0da34c,#0ca34b,#0aa34b,#09a34b,#07a34a,#08a348,#0ca344,#0fa340,#10a23e,#10a13c,#0fa13b,#0ea03a,#0ca03a,#09a03a,#09a13a,#0da33a,#18a638,#27aa35,#3aaf31,#4fb42c,#64b927,#78bf22,#87c41f,#92c81e,#9ccc1d,#a7d11b,#b2d419,#bdd716)"></i><i style="left:14px;top:90px;width:95px;background:linear-gradient(90deg,#14a34c,#12a34c,#10a24c,#0fa24c,#0da24c,#0ba24c,#0aa24c,#08a24c,#07a24b,#07a24a,#0aa346,#0ea341,#10a23f,#10a13d,#0fa13b,#0ea03b,#0ca03a,#09a03b,#08a03b,#0aa23b,#13a53a,#21a937,#33ad33,#47b22e,#5bb729,#70bd24,#82c220,#8ec61e,#98cb1d,#a2cf1c,#add31b,#b8d619,#c2d815)"></i><i style="left:14px;top:91px;width:96px;background:linear-gradient(90deg,#13a34c,#12a24d,#10a24d,#0ea24d,#0ca24d,#0ba24d,#09a24d,#07a24c,#06a24c,#07a24a,#0aa246,#0ea241,#10a23f,#10a13d,#0fa03c,#0da03b,#0ba03b,#08a03c,#07a13c,#0ca23b,#17a639,#27aa36,#3aaf31,#4eb42d,#62b928,#77bf22,#88c41e,#94c81c,#9dcc1c,#a7d11b,#b2d41b,#bdd719,#c8da13)"></i><i style="left:14px;top:92px;width:96px;background:linear-gradient(90deg,#13a24d,#11a24d,#10a24d,#0ea24d,#0ca24d,#0aa24d,#08a24d,#07a24d,#05a24d,#06a24b,#09a247,#0ea242,#10a23f,#10a13d,#0fa03c,#0da03c,#0aa03c,#07a03c,#07a13c,#0ca33c,#18a639,#28aa36,#3baf31,#4eb42d,#62b928,#78bf21,#8bc51c,#97c91b,#a0cd1b,#a9d11b,#b4d51c,#bfd81b,#cbdb14)"></i><i style="left:14px;top:93px;width:97px;background:linear-gradient(90deg,#12a24d,#11a24e,#0fa24e,#0da24e,#0ba14e,#09a14e,#08a14e,#06a14e,#05a14d,#05a14b,#09a247,#0ea242,#0fa13f,#0fa13d,#0ea03c,#0ca03c,#09a03d,#06a03d,#06a13d,#0da33c,#1ca739,#2dac35,#40b031,#52b52d,#67ba26,#7fc11f,#92c71a,#9ccc19,#a5cf1b,#aed31d,#b9d61f,#c4da1b,#d1dd12)"></i><i style="left:14px;top:94px;width:98px;background:linear-gradient(90deg,#12a24e,#11a14e,#0fa14e,#0da14e,#0ba14e,#09a14e,#07a14e,#05a14e,#04a14e,#04a14c,#08a148,#0ca143,#0fa140,#0fa13e,#0ea03d,#0ca03d,#09a03d,#06a03e,#05a03e,#0aa23d,#16a53b,#26aa37,#37ae33,#48b22f,#5cb72a,#73be22,#8bc61a,#9acb17,#a3ce19,#abd11c,#b4d520,#bed821,#cbdc1a,#d7df0f)"></i><i style="left:14px;top:95px;width:99px;background:linear-gradient(90deg,#11a14f,#10a14f,#0fa14f,#0da14f,#0ba14f,#09a14f,#07a14f,#05a14f,#03a14e,#04a14d,#08a148,#0ca143,#0fa140,#0fa03e,#0da03e,#0ba03e,#08a03e,#05a03e,#05a13e,#0ba33d,#18a63b,#29aa37,#39ae34,#4bb32f,#60b929,#7ac11f,#93c817,#a1cd16,#a8d019,#afd31f,#b8d624,#c4da22,#d1de18,#dde10c)"></i><i style="left:14px;top:96px;width:99px;background:linear-gradient(90deg,#11a14f,#10a14f,#0ea14f,#0ca14f,#0aa14f,#08a14f,#06a14f,#04a14f,#03a04f,#04a14d,#07a149,#0ca144,#0fa140,#0fa03f,#0da03e,#0aa03f,#07a03f,#05a03f,#05a13f,#0ba33e,#18a63c,#27aa38,#37ae35,#49b330,#60b929,#7bc11e,#95c915,#a4ce14,#abd119,#b2d320,#bad627,#c5da25,#d3de19,#e0e20c)"></i><i style="left:14px;top:97px;width:100px;background:linear-gradient(90deg,#10a150,#10a14f,#0ea14f,#0ca14f,#0aa04f,#08a04f,#06a04f,#04a04f,#03a04f,#04a04d,#08a048,#0ca144,#0fa040,#0ea03f,#0ca03f,#09a03f,#07a040,#04a040,#05a140,#0ca33f,#19a63c,#28aa39,#38ae35,#4cb430,#66bb26,#83c41b,#9dcc13,#aad113,#b0d31b,#b6d525,#bed82a,#cbdc24,#dae015,#e6e308)"></i><i style="left:14px;top:98px;width:101px;background:linear-gradient(90deg,#10a051,#0fa050,#0ea04f,#0ca050,#0aa050,#08a050,#06a050,#04a050,#02a04f,#03a04d,#07a049,#0ba045,#0ea041,#0ea040,#0ca040,#0aa040,#07a040,#05a041,#04a041,#08a240,#12a53e,#1fa83c,#2eac38,#40b034,#58b72c,#75c021,#92c916,#a7d011,#b1d316,#b5d522,#bbd62b,#c5da2c,#d3de20,#e1e210,#eae405)"></i><i style="left:15px;top:99px;width:101px;background:linear-gradient(90deg,#0fa051,#0ea050,#0da050,#0ba050,#09a050,#07a050,#05a050,#03a050,#02a04f,#04a04c,#08a048,#0ca044,#0ea041,#0ea040,#0ba040,#09a041,#06a041,#04a041,#05a142,#0aa241,#15a53f,#21a83c,#31ac39,#46b232,#61ba28,#7fc31d,#9bcc14,#aed212,#b5d51b,#b9d628,#bfd830,#cbdc2a,#dae01a,#e7e30b,#eee403)"></i><i style="left:15px;top:100px;width:101px;background:linear-gradient(90deg,#0fa051,#0ea050,#0ca050,#0aa050,#08a050,#06a050,#04a050,#03a050,#02a04f,#05a04c,#09a048,#0ca044,#0ea041,#0da041,#0ba041,#09a041,#06a042,#04a042,#05a143,#0aa242,#13a540,#1fa83e,#2fac3a,#44b233,#60ba29,#7ec31e,#9acc15,#afd314,#b7d61e,#bbd72b,#c1d832,#cddc2b,#dde11a,#e9e40a,#f0e403)"></i><i style="left:15px;top:101px;width:102px;background:linear-gradient(90deg,#0fa052,#0ea051,#0ca050,#0aa050,#08a050,#06a050,#04a050,#02a050,#03a04e,#05a04b,#09a047,#0da043,#0ea042,#0da042,#0ba042,#09a042,#06a043,#04a043,#05a144,#0ba343,#14a542,#20a83f,#31ad3a,#49b433,#65bc29,#84c51e,#9fce17,#b2d41a,#bad726,#bdd832,#c5da34,#d4de26,#e4e313,#eee506,#f2e301)"></i><i style="left:15px;top:102px;width:103px;background:linear-gradient(90deg,#0ea052,#0da051,#0ca050,#0aa050,#08a050,#06a050,#04a050,#02a04f,#03a04e,#06a04a,#0aa046,#0da043,#0ea042,#0da042,#0ba043,#08a043,#06a043,#05a044,#06a145,#0ca344,#15a543,#21a840,#33ad3b,#4db533,#6abe29,#88c720,#a3cf1b,#b5d521,#bbd72e,#c0d938,#cbdc32,#dce020,#eae40d,#f2e403,#f4e201)"></i><i style="left:15px;top:103px;width:104px;background:linear-gradient(90deg,#0ea053,#0da051,#0ba050,#09a050,#07a050,#05a050,#04a050,#02a04f,#03a04e,#06a04a,#0aa047,#0da044,#0ea043,#0ea043,#0ca043,#09a044,#07a044,#05a045,#06a145,#0aa246,#11a445,#1ba743,#29ab3f,#3fb139,#5ab931,#77c128,#93ca22,#abd222,#b8d72c,#bdd838,#c5da3a,#d4de2b,#e5e317,#f0e508,#f4e302,#f5e101)"></i><i style="left:15px;top:104px;width:104px;background:linear-gradient(90deg,#0ea053,#0da052,#0ba051,#09a050,#07a050,#05a050,#03a050,#02a04f,#03a04d,#07a04a,#0aa046,#0da044,#0ea044,#0ea044,#0ca044,#0aa044,#07a045,#06a045,#06a146,#0aa247,#11a446,#1aa744,#28aa41,#3eb03c,#58b835,#73c02d,#90c927,#a8d129,#b7d632,#bdd83d,#c6db3c,#d6df2c,#e7e317,#f2e408,#f5e202,#f6df01)"></i><i style="left:15px;top:105px;width:105px;background:linear-gradient(90deg,#0ea053,#0ca052,#0ba051,#09a050,#07a050,#05a050,#03a050,#02a04f,#04a04c,#07a049,#0ba046,#0da045,#0ea044,#0ea045,#0ca045,#09a045,#07a046,#06a046,#07a147,#0ba348,#12a447,#1ca745,#2bab42,#41b13d,#5bb937,#76c131,#92ca2d,#aad231,#b7d73c,#bfd942,#ccdd3a,#dee126,#ede412,#f5e306,#f6e002,#f6dd01)"></i><i style="left:15px;top:106px;width:106px;background:linear-gradient(90deg,#0da054,#0ca053,#0aa051,#08a050,#06a050,#04a050,#03a050,#02a04f,#05a04c,#08a048,#0ba046,#0da045,#0fa045,#0ea045,#0ca046,#09a046,#07a046,#06a047,#08a149,#0da349,#14a548,#1ea846,#2fac43,#45b23f,#5eba3a,#79c235,#95cb34,#acd33b,#b8d844,#c2db45,#d3df36,#e5e320,#f2e40f,#f7e106,#f7dd02,#f7da01)"></i><i style="left:15px;top:107px;width:107px;background:linear-gradient(90deg,#0da055,#0ba053,#0aa051,#08a050,#06a050,#04a050,#03a050,#02a04e,#05a04c,#08a049,#0ba047,#0da046,#0ea046,#0ea046,#0da046,#0aa047,#08a047,#07a048,#08a149,#0ba24a,#11a44a,#1aa648,#27aa46,#3aaf43,#51b63f,#6abd3b,#84c539,#9ecf3d,#b1d646,#bcd94b,#cadd41,#dde22e,#ede51b,#f5e30d,#f7de06,#f7da02,#f7d600)"></i><i style="left:15px;top:108px;width:107px;background:linear-gradient(90deg,#0ca056,#0ba054,#09a052,#08a051,#06a050,#04a050,#02a050,#03a04e,#05a04b,#08a049,#0ba047,#0da047,#0ea047,#0ea047,#0da047,#0ba047,#08a048,#07a049,#08a14a,#0ca34b,#11a44b,#1aa64a,#27aa48,#3aaf45,#50b542,#67bc3f,#81c43f,#9bce44,#afd54c,#bdda4f,#ccde43,#dfe330,#efe51d,#f6e210,#f8dd08,#f7d803,#f7d301)"></i><i style="left:15px;top:109px;width:108px;background:linear-gradient(90deg,#0ca057,#0ba055,#09a052,#07a051,#05a050,#03a050,#02a04f,#03a04e,#06a04b,#09a049,#0ba048,#0da047,#0ea047,#0ea048,#0da048,#0aa048,#08a049,#08a14a,#0aa24b,#0da34c,#13a54d,#1ca74b,#2aab49,#3eb046,#54b644,#6bbd42,#84c645,#9ecf4c,#b2d753,#c2dc50,#d4e140,#e7e52c,#f3e51c,#f7e011,#f8d908,#f8d402,#f7cf00)"></i><i style="left:15px;top:110px;width:109px;background:linear-gradient(90deg,#0ba059,#0aa056,#09a053,#07a051,#05a050,#03a050,#02a04f,#03a04d,#06a04b,#09a049,#0ba048,#0da048,#0ea048,#0ea048,#0da049,#0aa049,#09a049,#09a14b,#0ba24c,#0ea34e,#14a54e,#1ea84c,#2eac4a,#42b147,#58b745,#6fbe46,#88c74c,#a2d154,#b6d858,#c8de4f,#dde33d,#eee62b,#f6e31c,#f8dd11,#f8d607,#f8d002,#f7cb00)"></i><i style="left:15px;top:111px;width:110px;background:linear-gradient(90deg,#0ba05a,#0aa057,#08a054,#07a051,#05a050,#03a050,#02a04f,#03a04d,#06a04b,#08a04a,#0ba049,#0ca049,#0ea049,#0fa049,#0da049,#0ba04a,#09a04a,#09a14b,#0aa24d,#0ea34e,#12a44f,#1aa64e,#27aa4c,#39af4a,#4eb548,#63bb48,#79c24d,#93cc56,#abd55c,#c0dc59,#d4e24a,#e8e638,#f3e628,#f7e01b,#f8d80e,#f8d105,#f8cc01,#f7c700)"></i><i style="left:15px;top:112px;width:110px;background:linear-gradient(90deg,#0aa05b,#0aa058,#08a055,#06a052,#04a050,#03a050,#02a04f,#03a04d,#06a04b,#08a04a,#0aa04a,#0ca04a,#0ea04a,#0fa04a,#0ea04a,#0ca04a,#0aa04b,#09a14c,#0ba24d,#0ea34f,#13a450,#1aa64f,#27aa4e,#39af4b,#4db44a,#61ba4b,#77c251,#91cc5b,#abd561,#c2dd5c,#d7e34d,#eae73b,#f5e52b,#f8df1d,#f8d70f,#f8d005,#f8ca01,#f7c500)"></i><i style="left:15px;top:113px;width:111px;background:linear-gradient(90deg,#0aa05c,#09a059,#08a055,#06a052,#04a051,#02a050,#02a04f,#04a04d,#06a04b,#08a04b,#0aa04b,#0ca04b,#0ea04b,#0fa04b,#0ea04b,#0ca04b,#0aa04c,#0aa14d,#0ca24f,#10a350,#14a551,#1ca750,#2aab4f,#3db04d,#51b54b,#64bc4e,#7cc457,#97cf61,#b2d864,#cae05b,#e0e64a,#f0e839,#f7e329,#f8db1a,#f8d30b,#f8cc03,#f8c700,#f7c200)"></i><i style="left:16px;top:114px;width:111px;background:linear-gradient(90deg,#0aa05c,#08a058,#07a055,#05a052,#03a051,#02a050,#03a04e,#05a04d,#07a04c,#09a04b,#0ba04b,#0da04b,#0ea04b,#0ea04b,#0da04c,#0ba04c,#0aa04d,#0ba14e,#0ea250,#11a452,#17a552,#20a851,#30ac4f,#43b24e,#55b74e,#6abe54,#84c85f,#a1d367,#bcdc65,#d5e358,#e9e847,#f4e636,#f8df25,#f8d714,#f8ce07,#f8c801,#f8c300,#f7be00)"></i><i style="left:16px;top:115px;width:112px;background:linear-gradient(90deg,#09a05c,#08a059,#06a056,#05a053,#03a051,#02a050,#03a04e,#05a04d,#07a04c,#09a04c,#0ba04c,#0da04c,#0ea04c,#0ea04c,#0da04c,#0ba04d,#0ba14e,#0ca24f,#0fa351,#13a453,#18a654,#23a952,#33ad50,#46b24f,#58b851,#6ec05a,#8bcb65,#aad66a,#c5df64,#dee656,#efe844,#f6e432,#f8db1f,#f8d20e,#f8cb04,#f8c500,#f8c000,#f8bb00)"></i><i style="left:16px;top:116px;width:112px;background:linear-gradient(90deg,#09a05d,#08a05a,#06a056,#04a053,#03a051,#02a050,#03a04e,#05a04e,#07a04d,#09a04d,#0ba04d,#0ca04d,#0ea04d,#0fa04d,#0da04d,#0ca04e,#0ba14f,#0da250,#10a352,#13a454,#19a655,#23a954,#33ad52,#44b251,#56b854,#6dc05d,#8ccc68,#acd76d,#c8e166,#e0e758,#f1e846,#f7e332,#f8da1e,#f8d00d,#f8c903,#f8c300,#f8bf00,#f8ba00)"></i><i style="left:16px;top:117px;width:113px;background:linear-gradient(90deg,#09a05e,#08a05b,#06a057,#04a054,#02a052,#02a050,#03a04f,#04a04e,#06a04e,#08a04e,#0aa04e,#0ca04e,#0da04e,#0fa04e,#0ea04e,#0ca04e,#0ca04f,#0da151,#10a352,#13a454,#17a556,#1ea856,#2cab54,#3cb053,#4cb555,#61bc5c,#7ec767,#9fd36f,#bedd6c,#d8e561,#ece951,#f5e63d,#f8dd28,#f8d414,#f8cb06,#f8c501,#f8c000,#f8bb00,#f8b700)"></i><i style="left:16px;top:118px;width:114px;background:linear-gradient(90deg,#09a05e,#07a05c,#06a058,#04a055,#02a052,#02a050,#03a04f,#04a04f,#06a04f,#08a04f,#0aa04f,#0ca04e,#0da04e,#0ea04e,#0ea04f,#0ca04f,#0ca150,#0ea252,#11a354,#14a456,#18a657,#20a857,#2eac55,#3db055,#4eb659,#67bf62,#88cb6d,#aad771,#c7e16b,#e0e85e,#f1e94d,#f7e337,#f8d920,#f8cf0e,#f8c703,#f8c200,#f8bd00,#f8b800,#f8b400)"></i><i style="left:16px;top:119px;width:115px;background:linear-gradient(90deg,#09a05f,#07a05c,#05a059,#03a056,#02a053,#01a051,#03a050,#04a050,#06a04f,#08a04f,#0aa04f,#0ca04f,#0da04f,#0fa04f,#0ea04f,#0da050,#0da151,#0fa253,#12a355,#15a557,#1aa658,#22a958,#30ac57,#3eb157,#51b75d,#6fc268,#93cf72,#b5db72,#d1e469,#e8e95c,#f4e748,#f8df2f,#f8d419,#f8cb08,#f8c401,#f8be00,#f8b900,#f8b500,#f8b100)"></i><i style="left:16px;top:120px;width:115px;background:linear-gradient(90deg,#09a05f,#07a05d,#05a05a,#03a056,#02a053,#01a051,#03a051,#04a050,#06a050,#08a050,#0aa050,#0ca050,#0da050,#0ea050,#0ea050,#0da051,#0da152,#10a254,#13a356,#16a558,#1aa659,#22a959,#2eac58,#3cb05a,#51b861,#71c46c,#96d174,#b8dd73,#d4e56b,#eaea5d,#f5e748,#f8de2f,#f8d317,#f8c907,#f8c201,#f8bc00,#f8b700,#f8b200,#f8af00)"></i><i style="left:16px;top:121px;width:116px;background:linear-gradient(90deg,#08a060,#07a05e,#05a05b,#03a057,#02a054,#01a052,#02a052,#04a051,#06a051,#07a051,#09a051,#0ba051,#0da051,#0ea051,#0ea051,#0ea051,#0ea152,#10a254,#13a356,#16a458,#19a65a,#1fa85b,#28aa5a,#34ae5b,#46b460,#64bf6b,#89cd75,#add977,#cae371,#e3e967,#f2e955,#f7e23c,#f8d722,#f8cd0e,#f8c403,#f8bd00,#f8b800,#f8b300,#f8af00,#f8ac00)"></i><i style="left:16px;top:122px;width:117px;background:linear-gradient(90deg,#08a061,#06a05f,#04a05c,#03a058,#01a055,#01a053,#02a052,#04a052,#06a052,#07a052,#09a052,#0ba052,#0da052,#0ea052,#0ea052,#0ea052,#0fa153,#11a255,#14a357,#17a559,#1aa65b,#20a85c,#29aa5c,#35af5e,#4cb766,#6fc471,#96d279,#b8dd78,#d4e671,#eaea65,#f5e750,#f8de35,#f8d31b,#f8c809,#f8c001,#f8b900,#f8b400,#f8af00,#f8ab00,#f8a900)"></i><i style="left:16px;top:123px;width:118px;background:linear-gradient(90deg,#08a062,#06a060,#04a05d,#02a059,#01a056,#01a054,#02a053,#04a053,#06a053,#07a053,#09a052,#0ba052,#0da052,#0ea052,#0fa052,#0ea053,#0fa154,#12a256,#15a458,#18a55a,#1ba65c,#20a85d,#29ab5e,#38b062,#55ba6b,#7cc977,#a2d67c,#c2e179,#dde871,#f0ea62,#f7e449,#f8da2d,#f8cf14,#f8c405,#f8bc01,#f8b500,#f8b000,#f8ab00,#f8a800,#f8a700)"></i><i style="left:16px;top:124px;width:118px;background:linear-gradient(90deg,#07a063,#06a061,#04a05d,#02a05a,#01a057,#01a055,#02a054,#04a054,#06a054,#07a054,#09a053,#0ba053,#0da053,#0ea053,#0fa053,#0fa054,#10a155,#13a257,#16a459,#18a55b,#1ba65d,#20a85f,#27aa60,#38b065,#58bc6f,#80cb7a,#a6d87f,#c6e27c,#e1e974,#f1ea64,#f7e34a,#f8d92d,#f8ce14,#f8c305,#f8ba01,#f8b300,#f8ad00,#f8a900,#f8a600,#f8a500)"></i><i style="left:16px;top:125px;width:119px;background:linear-gradient(90deg,#07a064,#05a062,#04a05e,#02a05b,#01a058,#01a056,#02a055,#04a055,#05a055,#07a054,#09a054,#0aa054,#0ca054,#0ea054,#0fa054,#0fa054,#10a156,#12a258,#15a35a,#18a55c,#1aa65e,#1da760,#23a962,#30ae65,#4cb86e,#74c77a,#9bd481,#bce081,#d9e87b,#edeb70,#f6e759,#f8de3c,#f8d320,#f8c70b,#f8bd02,#f8b500,#f8ae00,#f8a900,#f8a500,#f8a300,#f8a200)"></i><i style="left:17px;top:126px;width:119px;background:linear-gradient(90deg,#06a065,#05a062,#03a05e,#02a05b,#01a059,#01a057,#03a056,#04a056,#06a056,#07a055,#09a055,#0ba055,#0da055,#0ea055,#0fa055,#0fa156,#11a157,#14a359,#16a45b,#18a55e,#1ba660,#1ea862,#25aa65,#3ab26b,#5dbf76,#86ce80,#abda85,#cae483,#e4ea7c,#f3ea6b,#f7e350,#f8d932,#f8ce17,#f8c307,#f8b801,#f8b000,#f8aa00,#f8a500,#f8a200,#f8a100,#f89f00)"></i><i style="left:17px;top:127px;width:120px;background:linear-gradient(90deg,#06a066,#04a063,#03a05f,#02a05c,#01a05a,#01a058,#03a057,#04a057,#06a057,#08a056,#09a056,#0ba056,#0da056,#0ea056,#0fa056,#10a157,#12a259,#14a35b,#16a45d,#18a55f,#1aa662,#1ea865,#29ac68,#43b670,#6ac47c,#93d285,#b7de88,#d4e785,#ebeb7c,#f5e866,#f8df49,#f8d52a,#f8ca11,#f8be04,#f8b400,#f8ac00,#f8a600,#f8a200,#f8a000,#f89e00,#f89d00)"></i><i style="left:17px;top:128px;width:120px;background:linear-gradient(90deg,#05a067,#04a064,#03a060,#02a05d,#01a05b,#01a059,#03a058,#04a058,#06a058,#07a057,#09a057,#0ba057,#0ca057,#0ea056,#0fa057,#10a158,#12a25a,#14a35c,#15a45e,#17a561,#19a664,#1ea867,#2aad6b,#47b774,#70c680,#98d489,#bbe08c,#d8e889,#edec7e,#f6e767,#f8de49,#f8d42b,#f8c911,#f8bd04,#f8b300,#f8aa00,#f8a300,#f89f00,#f89d00,#f89c00,#f89b00)"></i><i style="left:17px;top:129px;width:121px;background:linear-gradient(90deg,#05a068,#04a064,#03a061,#02a05e,#01a05c,#01a05a,#03a05a,#04a059,#06a059,#08a058,#09a058,#0ba058,#0da057,#0ea057,#0fa058,#10a159,#11a25b,#13a35e,#14a460,#16a563,#19a766,#1fa969,#30b06f,#53bc7a,#7dcb86,#a5d98e,#c6e48f,#e1eb8b,#f2eb7c,#f7e461,#f8db42,#f8d023,#f8c50c,#f8b902,#f8ae00,#f8a600,#f8a000,#f89c00,#f89b00,#f89a00,#f89800)"></i><i style="left:17px;top:130px;width:122px;background:linear-gradient(90deg,#05a068,#04a065,#03a062,#02a05f,#01a05d,#01a05b,#03a05b,#04a05a,#06a05a,#07a059,#09a059,#0ba059,#0ca059,#0ea058,#0fa059,#0fa15a,#10a15c,#11a25e,#13a361,#14a464,#16a667,#1ca86a,#2aae6f,#49b979,#72c885,#9ad68f,#bde193,#dae991,#eeec87,#f6e770,#f8de52,#f8d433,#f8ca17,#f8bf06,#f8b301,#f8a900,#f8a100,#f89c00,#f89900,#f89800,#f89700,#f89500)"></i><i style="left:17px;top:131px;width:123px;background:linear-gradient(90deg,#05a069,#04a066,#03a063,#02a060,#01a05e,#01a05c,#03a05c,#04a05b,#06a05b,#07a05b,#09a05a,#0ba05a,#0ca05a,#0ea05a,#0ea05a,#0fa15c,#0fa15e,#10a260,#11a363,#13a466,#16a669,#1ea96e,#31b174,#55be7f,#7fcd8b,#a6da93,#c7e496,#e2eb93,#f2eb85,#f7e46b,#f8da4c,#f8d02c,#f8c612,#f8bb05,#f8af01,#f8a501,#f89d00,#f89800,#f89600,#f89500,#f89400,#f89300)"></i><i style="left:17px;top:132px;width:123px;background:linear-gradient(90deg,#05a06a,#04a067,#03a064,#02a061,#01a05f,#01a05d,#03a05d,#04a05c,#06a05c,#07a05c,#09a05b,#0ba05b,#0ca05b,#0da05b,#0ea05c,#0ea15d,#0ea15f,#0ea262,#0fa365,#11a468,#15a66c,#1eaa70,#34b277,#5ac083,#84cf8e,#aadc96,#cbe699,#e5ec96,#f4eb87,#f8e36c,#f8d94d,#f8cf2e,#f8c514,#f8ba06,#f8ae02,#f8a301,#f89b01,#f89601,#f89400,#f89300,#f89201,#f89100)"></i><i style="left:17px;top:133px;width:124px;background:linear-gradient(90deg,#05a06a,#04a068,#03a065,#02a062,#01a060,#01a05e,#03a05e,#04a05d,#06a05d,#08a05d,#09a05c,#0ba05c,#0ca05c,#0da05d,#0ea05e,#0da15f,#0ca161,#0da264,#0ea367,#10a46a,#16a76e,#22ac74,#3eb67d,#67c589,#91d494,#b5e09a,#d5e99d,#eced97,#f6e984,#f8df67,#f8d548,#f8cb2a,#f8c111,#f8b606,#f8aa03,#f8a003,#f89702,#f89301,#f89201,#f89101,#f88f01,#f88e01)"></i><i style="left:17px;top:134px;width:125px;background:linear-gradient(90deg,#04a06b,#04a069,#03a067,#02a064,#01a061,#01a060,#03a05f,#04a05e,#06a05e,#07a05e,#09a05d,#0aa05d,#0ca05e,#0da05e,#0da15f,#0ca161,#0ba163,#0ba165,#0ca268,#0ea46b,#13a66f,#1daa74,#36b37c,#5cc188,#86d093,#acdd9b,#cce79f,#e6ed9d,#f4eb90,#f8e277,#f8d85a,#f8cf3c,#f8c520,#f8bb0e,#f8b007,#f8a505,#f89a04,#f89302,#f79001,#f78f01,#f78e01,#f78d01,#f78b01)"></i><i style="left:18px;top:135px;width:125px;background:linear-gradient(90deg,#04a06b,#03a069,#02a067,#01a064,#01a061,#02a060,#03a060,#05a05f,#06a05f,#08a05f,#09a05f,#0ba05f,#0ca05f,#0da161,#0ca162,#0ba163,#09a165,#09a167,#0ba26a,#0ea46e,#15a873,#26ae7a,#46ba84,#70c990,#98d79a,#bbe2a0,#daeba2,#efed9d,#f7e88b,#f8de70,#f8d454,#f8cb37,#f8c21d,#f8b70e,#f8ac09,#f8a108,#f89705,#f79003,#f78d02,#f78c02,#f78b02,#f78a02,#f78901)"></i><i style="left:18px;top:136px;width:126px;background:linear-gradient(90deg,#04a06c,#03a06a,#02a068,#01a065,#01a062,#02a061,#03a061,#05a060,#06a060,#08a060,#09a060,#0ba060,#0ca161,#0ca163,#0ba164,#09a166,#08a167,#08a16a,#0aa36d,#0ea571,#18a977,#2eb17e,#52be8a,#7dce96,#a4db9e,#c6e6a4,#e2eda4,#f3ec9b,#f7e487,#f8da6d,#f8d052,#f8c736,#f8bf1e,#f8b411,#f8a90d,#f89d0b,#f79307,#f78d04,#f78b03,#f78a03,#f68903,#f78802,#f78601)"></i><i style="left:18px;top:137px;width:126px;background:linear-gradient(90deg,#04a06d,#03a06b,#02a069,#01a066,#01a064,#02a062,#03a062,#05a062,#06a061,#08a061,#09a061,#0ba062,#0ca164,#0ca165,#0ba167,#08a168,#07a169,#06a16c,#08a36f,#0ea573,#19aa79,#31b382,#58c18d,#82d099,#a8dda2,#cae7a7,#e5eea7,#f4ec9d,#f8e388,#f8d96f,#f8cf56,#f8c73c,#f8be24,#f8b416,#f8a911,#f89d0e,#f7920a,#f78b05,#f68904,#f68704,#f68604,#f68503,#f78402)"></i><i style="left:18px;top:138px;width:127px;background:linear-gradient(90deg,#03a06e,#03a06c,#02a06a,#01a067,#01a065,#02a063,#03a063,#05a063,#06a062,#08a062,#09a063,#0aa164,#0ba166,#0ba168,#0aa169,#07a16a,#05a16c,#05a16e,#08a372,#0fa677,#1dac7d,#3bb787,#64c693,#8ed49f,#b3e1a6,#d4eaab,#ecefa8,#f6ea9a,#f8e084,#f8d56c,#f8cc55,#f8c43d,#f8bc26,#f8b21a,#f8a616,#f79a11,#f78f0b,#f68906,#f68605,#f58505,#f68405,#f68303,#f78102)"></i><i style="left:18px;top:139px;width:128px;background:linear-gradient(90deg,#03a06f,#03a06d,#02a06b,#01a068,#01a066,#02a065,#03a064,#05a064,#06a064,#08a064,#09a065,#0aa166,#0ba168,#0ba26a,#09a16b,#07a16c,#05a16d,#04a16f,#06a273,#0ca577,#19aa7e,#33b487,#5bc393,#85d19f,#aadea7,#cce9ad,#e7efad,#f5eda3,#f8e48f,#f8d978,#f8cf63,#f8c74e,#f8c038,#f8b725,#f8ac1d,#f8a019,#f79412,#f68a0b,#f58507,#f58306,#f58206,#f58105,#f68004,#f77f03)"></i><i style="left:18px;top:140px;width:129px;background:linear-gradient(90deg,#03a070,#03a06e,#02a06c,#01a069,#01a067,#02a066,#03a065,#05a065,#06a065,#08a066,#09a167,#0aa168,#0aa26a,#0aa26c,#08a26d,#06a16f,#04a170,#04a172,#07a376,#0ea67b,#1ead82,#3eb88c,#67c799,#91d6a4,#b6e2ac,#d6ecb1,#eeefae,#f7eaa0,#f8e08b,#f8d675,#f8cd62,#f8c54f,#f8be39,#f8b529,#f8a921,#f79d1c,#f69114,#f5870c,#f58208,#f48107,#f58007,#f57f06,#f67e04,#f67c03)"></i><i style="left:18px;top:141px;width:129px;background:linear-gradient(90deg,#02a071,#02a06f,#02a06d,#01a06a,#01a068,#02a067,#03a066,#05a066,#06a066,#07a167,#08a169,#09a16b,#0aa26d,#0aa26e,#08a270,#05a171,#03a172,#04a274,#07a378,#0fa77d,#21ae85,#43bb90,#6dca9d,#96d8a8,#bae4b0,#dbedb4,#f0f0b0,#f8eaa1,#f8df8c,#f8d576,#f8cc65,#f8c554,#f8bd40,#f8b52f,#f8aa27,#f79d20,#f69117,#f5860e,#f4810a,#f47e08,#f47d08,#f57c06,#f57b05,#f67a04)"></i><i style="left:18px;top:142px;width:130px;background:linear-gradient(90deg,#02a072,#02a070,#02a06e,#01a06b,#01a069,#02a068,#03a067,#05a068,#06a068,#07a169,#08a16b,#09a26d,#0aa26f,#09a271,#07a272,#04a273,#03a274,#04a277,#08a47b,#12a881,#29b18a,#4fbf96,#79cfa3,#a2dcad,#c6e8b5,#e4f0b8,#f4efb0,#f8e79d,#f8dc87,#f8d273,#f8ca64,#f8c354,#f8bb42,#f8b232,#f8a72a,#f79a22,#f58d18,#f4830f,#f37e0b,#f37c09,#f47b08,#f57a07,#f57906,#f57705)"></i><i style="left:18px;top:143px;width:131px;background:linear-gradient(90deg,#02a073,#02a071,#02a06f,#01a06c,#01a06a,#02a069,#03a069,#04a069,#06a16a,#07a16b,#08a16d,#09a26f,#09a271,#08a373,#06a274,#04a275,#03a276,#04a278,#07a47c,#10a782,#25af8a,#47bd96,#71cca2,#99daae,#bee6b6,#deefbb,#f2f1b7,#f8eaa7,#f8e091,#f8d57d,#f8cc6c,#f8c55f,#f8bf50,#f8b73f,#f8ad33,#f7a12b,#f69421,#f48816,#f37f0e,#f37b0b,#f3790a,#f47809,#f47708,#f57607,#f57506)"></i><i style="left:19px;top:144px;width:131px;background:linear-gradient(90deg,#01a073,#01a071,#01a06f,#01a06c,#01a06b,#02a06a,#03a06a,#05a06b,#06a16c,#07a16e,#08a270,#08a272,#08a374,#07a375,#05a277,#03a278,#03a279,#05a37c,#0ba581,#18ab87,#34b592,#5bc49e,#84d3aa,#abe0b5,#ceebbd,#eaf1be,#f7efb3,#f9e6a0,#f8db8b,#f8d178,#f8c96a,#f8c35e,#f8bc4f,#f8b440,#f8a936,#f79d2d,#f58f21,#f48316,#f37b0f,#f2780c,#f3770b,#f37609,#f47508,#f47407,#f47207)"></i><i style="left:19px;top:145px;width:131px;background:linear-gradient(90deg,#01a074,#01a072,#01a070,#01a06d,#01a06c,#02a06b,#03a06c,#04a16d,#05a16f,#06a270,#07a272,#08a374,#08a376,#06a378,#04a379,#03a37a,#03a37b,#06a47f,#0ca683,#1bac8b,#39b795,#61c6a2,#8ad5ae,#b0e2b9,#d3edc0,#edf2c1,#f8eeb4,#f9e5a1,#f8da8b,#f8d079,#f8c96c,#f8c261,#f8bb54,#f8b346,#f8a93b,#f69d31,#f59025,#f3831a,#f27a11,#f2760d,#f2740c,#f3730a,#f37309,#f47209,#f47108)"></i><i style="left:19px;top:146px;width:132px;background:linear-gradient(90deg,#01a075,#01a073,#01a071,#01a06e,#01a06d,#02a06d,#03a16e,#04a16f,#05a171,#06a273,#07a375,#08a377,#07a379,#06a37a,#04a37b,#03a37c,#04a37e,#07a482,#0fa787,#23af8f,#45bc9b,#6ecba7,#96dab3,#bce6be,#ddf0c5,#f2f2c1,#f9ecb2,#f9e19d,#f8d788,#f8ce77,#f8c66b,#f8c061,#f8b954,#f8b147,#f7a63d,#f69932,#f48c26,#f3801a,#f27812,#f2740e,#f2720c,#f2710b,#f3700a,#f36f09,#f36e09)"></i><i style="left:19px;top:147px;width:133px;background:linear-gradient(90deg,#01a076,#01a074,#01a072,#01a06f,#01a06e,#02a06e,#03a170,#04a171,#05a273,#06a275,#07a377,#07a379,#07a37b,#05a37c,#03a37d,#03a47e,#05a481,#09a585,#14a98b,#2cb294,#51c1a0,#7ad0ad,#a2deb9,#c7eac3,#e6f2c8,#f6f1c0,#f9e9ae,#f9de99,#f8d485,#f8cb76,#f8c46b,#f8bd61,#f8b755,#f8ae49,#f7a33f,#f59633,#f48927,#f27d1b,#f17513,#f1710f,#f2700d,#f26f0c,#f36e0b,#f36d0a,#f36c0a)"></i><i style="left:19px;top:148px;width:134px;background:linear-gradient(90deg,#00a076,#01a075,#00a073,#00a071,#01a070,#02a170,#03a172,#04a173,#04a275,#05a377,#06a37a,#07a47c,#06a47d,#04a47e,#03a47f,#03a480,#05a582,#09a586,#12a88c,#28b195,#4bbea0,#73ceac,#9bdcb8,#c0e8c3,#e0f1ca,#f4f3c6,#f9ecb7,#f9e1a2,#f8d68e,#f8cd7d,#f8c672,#f8bf68,#f8b95d,#f8b253,#f7a949,#f69e3e,#f59132,#f38426,#f2791b,#f17213,#f16f0f,#f16d0d,#f26c0c,#f26c0b,#f36b0b,#f2690b)"></i><i style="left:19px;top:149px;width:134px;background:linear-gradient(90deg,#00a077,#00a076,#00a074,#00a072,#01a071,#01a172,#02a174,#03a276,#04a278,#05a37a,#06a37c,#06a47e,#06a47f,#04a481,#03a482,#04a583,#06a585,#0aa689,#14a98f,#2db398,#51c1a4,#79d0af,#a0debb,#c5eac6,#e4f2cd,#f5f2c8,#faeab7,#f9e0a2,#f8d58f,#f8cc7f,#f8c474,#f8be6a,#f8b760,#f8b156,#f7a94d,#f69e43,#f59237,#f3852b,#f27a1f,#f17216,#f16d11,#f16b0e,#f26a0d,#f26a0c,#f2690b,#f2670c)"></i><i style="left:19px;top:150px;width:135px;background:linear-gradient(90deg,#00a078,#00a077,#00a075,#00a074,#00a173,#01a174,#02a276,#03a278,#04a37a,#05a37c,#05a47e,#06a480,#05a482,#03a483,#03a484,#05a585,#07a687,#0ca78c,#1aac93,#36b79d,#5dc5a9,#85d5b4,#abe2c0,#d0edcb,#ecf3cf,#f8f0c6,#fae7b3,#f9dc9f,#f8d28d,#f8c87e,#f8c173,#f8ba6a,#f8b460,#f8ae58,#f7a650,#f69c46,#f5903a,#f3832d,#f27821,#f17017,#f16b11,#f1690f,#f1680d,#f2670c,#f2660c,#f2650d)"></i><i style="left:19px;top:151px;width:136px;background:linear-gradient(90deg,#00a079,#00a078,#00a176,#00a175,#00a175,#01a177,#02a279,#03a27b,#03a37d,#04a47f,#05a481,#05a483,#04a484,#03a485,#04a586,#06a687,#09a68a,#0fa890,#21ae98,#41bba2,#68caad,#90d9b9,#b7e6c5,#daf0cf,#f2f4d0,#f9eec3,#fae4b0,#f9d99c,#f8ce8b,#f8c57e,#f8bd73,#f8b76a,#f8b161,#f8ab5a,#f7a452,#f69a48,#f58e3c,#f3822f,#f27722,#f16f18,#f16a12,#f1670f,#f1660d,#f2650d,#f2640d,#f1620e)"></i><i style="left:20px;top:152px;width:136px;background:linear-gradient(90deg,#00a17a,#00a179,#00a178,#00a177,#00a178,#01a27a,#02a27c,#02a37e,#03a380,#04a482,#05a584,#04a586,#03a587,#03a588,#05a688,#08a78a,#0ba78f,#16aa95,#2fb49e,#53c2a9,#7bd2b4,#a2e0c0,#c8eccc,#e7f3d3,#f7f2ce,#faeabd,#f9dfaa,#f8d497,#f8c988,#f8c07c,#f8b972,#f8b369,#f8ad61,#f8a85b,#f7a154,#f6974a,#f58b3e,#f38030,#f27523,#f16d19,#f16712,#f1650f,#f1640e,#f2630d,#f1620d,#f1600f)"></i><i style="left:20px;top:153px;width:136px;background:linear-gradient(90deg,#00a17b,#00a17b,#00a179,#00a179,#00a27a,#01a27c,#01a37e,#02a380,#03a482,#04a484,#04a586,#04a588,#03a589,#03a68a,#06a78a,#09a88d,#0da891,#19ab98,#33b6a1,#59c5ac,#80d4b7,#a7e2c3,#cdedcf,#ebf4d5,#f8f1ce,#fae8bd,#f9deaa,#f8d299,#f8c78a,#f8be7e,#f8b774,#f8b16b,#f8ab64,#f8a75f,#f7a159,#f6984f,#f58d43,#f48236,#f27728,#f16d1c,#f16714,#f16310,#f1620e,#f1610d,#f1600e,#f15e10)"></i><i style="left:20px;top:154px;width:137px;background:linear-gradient(90deg,#00a17d,#00a17c,#00a17c,#00a27c,#00a27d,#00a27e,#01a380,#02a382,#03a484,#03a586,#04a588,#04a58a,#03a58b,#04a68c,#06a78c,#09a88e,#0da893,#17ab99,#30b4a2,#53c3ac,#7ad2b7,#a1e0c2,#c7eccf,#e6f4d7,#f7f3d3,#faebc4,#f9e0b2,#f8d5a1,#f8c992,#f8bf85,#f8b77b,#f8b172,#f8ac6a,#f8a765,#f8a360,#f79c59,#f6934f,#f58942,#f47e35,#f27428,#f16b1c,#f16514,#f16110,#f1600e,#f15e0e,#f15d0f,#f05c10)"></i><i style="left:20px;top:155px;width:138px;background:linear-gradient(90deg,#00a17f,#00a27e,#00a27e,#00a27e,#00a27f,#00a381,#01a383,#01a485,#02a487,#03a589,#04a58b,#03a68c,#03a68d,#04a78e,#07a88f,#0ba991,#0fa996,#1dad9d,#39b8a6,#5ec7b0,#85d6bb,#ace4c8,#d2efd4,#edf4d9,#f9f1d1,#fae8c0,#f9ddaf,#f8d1a0,#f8c592,#f8bb85,#f8b37b,#f8ad72,#f8a86c,#f8a467,#f7a062,#f7995a,#f69150,#f58744,#f47d36,#f27229,#f1691d,#f16315,#f15f10,#f15d0e,#f15c0f,#f05b10,#f05a11)"></i><i style="left:20px;top:156px;width:139px;background:linear-gradient(90deg,#00a281,#00a280,#00a280,#00a281,#00a382,#00a384,#01a485,#01a487,#02a589,#03a58b,#03a68d,#03a68f,#03a78f,#05a890,#09a991,#0ca994,#12aa9a,#23b0a1,#43bdaa,#69ccb4,#90dbc0,#b8e8cd,#dcf2d9,#f3f5da,#faeece,#fae5bd,#f9daad,#f8cd9f,#f8c191,#f8b785,#f8af7b,#f8aa73,#f8a56d,#f8a168,#f79c63,#f7965b,#f68f51,#f58545,#f47b37,#f3712a,#f1681e,#f16115,#f15d11,#f15b0f,#f15a0f,#f05911,#f05812)"></i><i style="left:20px;top:157px;width:139px;background:linear-gradient(90deg,#00a283,#00a282,#00a282,#00a383,#00a385,#00a386,#00a488,#01a48a,#02a58c,#02a68e,#03a68f,#03a691,#04a791,#06a992,#0aaa93,#0daa97,#15ab9d,#28b2a4,#48bfad,#6eceb7,#96ddc3,#beead1,#e1f3dc,#f5f4dc,#faedce,#fae3be,#f9d8af,#f8cca1,#f8bf94,#f8b588,#f8ad7e,#f8a876,#f8a370,#f79e6b,#f79965,#f7945e,#f68e55,#f58549,#f47c3c,#f3722f,#f26822,#f16118,#f15c12,#f15910,#f05810,#f05711,#f05613)"></i><i style="left:20px;top:158px;width:140px;background:linear-gradient(90deg,#00a286,#00a284,#00a384,#00a386,#00a387,#00a489,#00a48a,#01a58c,#01a58e,#02a690,#02a692,#03a793,#04a893,#07a994,#0aaa95,#0eab99,#15ac9e,#27b2a5,#45bead,#69cdb7,#90dbc3,#b8e8d1,#dcf2dd,#f3f5df,#faefd4,#fae6c4,#f9dcb5,#f8d0a8,#f8c39b,#f8b78f,#f8ae84,#f8a77b,#f8a275,#f79e6f,#f79969,#f69463,#f68f5c,#f68952,#f58047,#f4773a,#f36e2d,#f26521,#f15e18,#f15912,#f05710,#f05611,#f05512,#f05413)"></i><i style="left:20px;top:159px;width:141px;background:linear-gradient(90deg,#00a388,#00a386,#00a387,#00a388,#00a48a,#00a48b,#00a58d,#00a58e,#01a690,#02a692,#02a794,#03a795,#05a995,#08aa96,#0cab98,#10ac9c,#1aaea2,#30b6a9,#50c3b1,#75d1bc,#9cdfc9,#c4ecd7,#e5f4e2,#f7f4df,#fbedd2,#fae3c2,#f9d8b5,#f8cca8,#f8be9b,#f8b38f,#f8aa84,#f8a47c,#f79f76,#f7996f,#f69469,#f69063,#f68b5c,#f58552,#f57d47,#f4743a,#f36b2e,#f26322,#f15b18,#f05712,#f05511,#f05411,#f05313,#f05214)"></i><i style="left:21px;top:160px;width:141px;background:linear-gradient(90deg,#00a389,#00a389,#00a38a,#00a48b,#00a48d,#00a58e,#00a590,#00a691,#01a693,#02a795,#02a797,#04a897,#07aa98,#0bab99,#0fac9c,#16aea2,#26b2a8,#40bdaf,#62cab8,#88d9c3,#b0e6d2,#d6f1e0,#f0f5e5,#faf1dc,#fae8cd,#f9dfbf,#f8d3b3,#f8c6a6,#f8b999,#f8ad8d,#f8a583,#f79f7c,#f79a75,#f6946e,#f58f67,#f68b62,#f6875b,#f58151,#f47945,#f37039,#f2682d,#f15f22,#f15818,#f05413,#f05311,#f05212,#f05114,#f05015)"></i><i style="left:21px;top:161px;width:141px;background:linear-gradient(90deg,#00a38b,#00a38b,#00a48c,#00a48d,#00a58f,#00a591,#00a592,#00a694,#01a696,#01a798,#02a899,#05a99a,#08ab9a,#0cac9b,#10ada0,#1aafa5,#2cb5ab,#48c0b2,#6acdbb,#8fdbc7,#b6e8d6,#dbf2e4,#f3f6e7,#fbf0dd,#fae7ce,#f9dec1,#f8d2b5,#f8c5a9,#f8b79c,#f8ab8f,#f8a385,#f79c7e,#f69676,#f5906e,#f58b68,#f58863,#f5845c,#f57e53,#f47748,#f36f3c,#f26730,#f15e25,#f1571b,#f05314,#f05112,#f05013,#f04f14,#f04e15)"></i><i style="left:21px;top:162px;width:142px;background:linear-gradient(90deg,#00a38c,#00a48d,#00a48e,#00a590,#00a591,#00a593,#00a694,#00a696,#01a798,#01a79a,#03a89c,#06aa9c,#09ac9d,#0dad9f,#14afa4,#20b2aa,#36b9b0,#54c5b7,#76d2c0,#9ce0cd,#c3ecdd,#e5f5e8,#f7f5e7,#fbeedb,#fae5cd,#f9dbc1,#f8cfb5,#f8c1a8,#f8b39b,#f8a78f,#f79e85,#f6977d,#f59075,#f58a6d,#f48667,#f58462,#f5805c,#f57a53,#f47348,#f36b3c,#f26330,#f15b24,#f0541a,#f05015,#f04f13,#f04e13,#f04d14,#f04c16)"></i><i style="left:21px;top:163px;width:143px;background:linear-gradient(90deg,#00a48d,#00a48e,#00a490,#00a591,#00a593,#00a695,#00a696,#00a798,#00a79a,#01a89c,#03a99e,#06aa9f,#09aca0,#0eaea2,#15b0a7,#22b3ad,#38bab2,#55c5b8,#76d2c2,#9adfce,#bfebdd,#e1f4ea,#f6f6eb,#fbf0e1,#fae7d3,#f9dec7,#f8d2bc,#f8c5b0,#f8b7a2,#f8aa95,#f79f8a,#f69781,#f59079,#f48971,#f4846a,#f48165,#f57f61,#f57b5a,#f47550,#f36d45,#f26539,#f25e2e,#f15623,#f0511a,#f04e15,#f04d13,#f04c14,#f04c15,#f04a16)"></i><i style="left:21px;top:164px;width:144px;background:linear-gradient(90deg,#00a48e,#00a490,#00a591,#00a593,#00a695,#00a697,#00a698,#00a79a,#00a79c,#01a89f,#04a9a1,#07aba3,#0bada4,#10afa7,#19b1ac,#2ab6b1,#43beb6,#61cabd,#83d7c7,#a7e3d5,#cceee4,#eaf5ee,#f9f5eb,#fbeee0,#fae5d2,#f9dbc7,#f8cfbc,#f8c1af,#f8b3a1,#f8a693,#f79b88,#f6927f,#f48a77,#f3836f,#f37f69,#f47d65,#f47b60,#f47759,#f4704f,#f36944,#f26138,#f1592d,#f15322,#f04e1a,#f04c16,#f04b14,#f04a15,#f04a16,#f04817)"></i><i style="left:21px;top:165px;width:144px;background:linear-gradient(90deg,#00a490,#00a491,#00a593,#00a594,#00a696,#00a698,#00a79a,#00a79c,#01a89e,#02a8a2,#04aaa4,#07aba7,#0cada8,#12b0ab,#1eb3b0,#31b9b5,#4cc2ba,#6bcec1,#8cdacc,#b0e6da,#d3f0e8,#eef6f0,#faf4ec,#fbece0,#f9e4d4,#f8dac9,#f8cdbe,#f8c0b1,#f8b1a2,#f8a494,#f79888,#f58e7f,#f48677,#f37f6f,#f37c6a,#f37a66,#f47862,#f4745b,#f46e51,#f36746,#f25f3b,#f1572f,#f05125,#f04d1d,#f04b17,#f04a15,#f04915,#f04816,#f04717)"></i><i style="left:22px;top:166px;width:144px;background:linear-gradient(90deg,#00a491,#00a593,#00a594,#00a696,#00a698,#00a79a,#00a79c,#00a89e,#01a8a2,#03a9a6,#06aba9,#09adab,#0eafae,#18b2b2,#29b7b6,#41bfba,#5ec9bf,#7fd5c9,#a1e1d5,#c4ece4,#e3f4ef,#f6f5f1,#fbf0e9,#fae8dd,#f9e0d2,#f8d5c8,#f8c8bb,#f8b9ad,#f8ab9e,#f79e8f,#f69284,#f4887c,#f38074,#f27a6d,#f27769,#f37665,#f47461,#f4705a,#f36950,#f26245,#f25a39,#f1532e,#f04e24,#f04a1d,#f04918,#f04816,#f04716,#f04617,#f04518)"></i><i style="left:22px;top:167px;width:145px;background:linear-gradient(90deg,#00a593,#00a594,#00a595,#00a697,#00a699,#00a79b,#00a79d,#01a8a0,#02a9a4,#04aaa9,#07abad,#0badb0,#11b0b3,#1db4b6,#32baba,#4cc3be,#6bcec4,#8cdacf,#afe6dc,#d1efea,#ecf5f2,#f9f3f1,#fbede8,#fae6dc,#f9ddd2,#f8d1c8,#f8c4ba,#f8b5ab,#f8a79b,#f79a8c,#f68d82,#f4837a,#f27a72,#f2756d,#f27369,#f37265,#f37061,#f36b59,#f3654f,#f25d44,#f15638,#f04f2e,#f04b25,#f0491e,#f04719,#f04616,#f04516,#f04417,#f04319)"></i><i style="left:22px;top:168px;width:146px;background:linear-gradient(90deg,#00a594,#00a595,#00a696,#00a698,#00a79a,#00a79c,#00a79e,#01a8a1,#02a9a6,#04aaab,#07abb0,#0badb3,#11b0b7,#1eb4ba,#34bbbd,#4fc4c0,#6dcec6,#8edad0,#b0e6dd,#d1efea,#eaf4f3,#f8f2f2,#fbedea,#fae6e0,#f9ded7,#f8d4cd,#f8c7c0,#f8b9b1,#f8aba1,#f79d91,#f69085,#f4847d,#f27a76,#f1746f,#f1716b,#f26f68,#f36d64,#f36b5f,#f36657,#f25f4c,#f15841,#f15136,#f04b2d,#f04825,#f0471f,#f0451a,#f04417,#f04317,#f04318,#f0421a)"></i><i style="left:22px;top:169px;width:146px;background:linear-gradient(90deg,#00a596,#00a596,#00a697,#00a699,#00a79b,#00a79d,#00a89f,#01a8a3,#03a9a8,#05aaae,#08acb3,#0caeb7,#13b1ba,#23b6bd,#3bbec0,#57c7c4,#76d2ca,#97ddd5,#b9e9e2,#d8f0ee,#eef3f4,#f9f0f1,#fbeae9,#fae4e0,#f8dcd8,#f8d2ce,#f8c5c1,#f8b7b1,#f8a9a1,#f79b91,#f68e85,#f4817d,#f27776,#f17070,#f16d6c,#f26b68,#f26a65,#f36860,#f36359,#f25d4e,#f15543,#f14f39,#f04a2f,#f04728,#f04521,#f0441c,#f04318,#f04217,#f04118,#f0401a)"></i><i style="left:22px;top:170px;width:147px;background:linear-gradient(90deg,#00a698,#00a697,#00a698,#00a69a,#00a79b,#00a79e,#01a8a1,#02a9a5,#03aaab,#06abb1,#09acb6,#0daebb,#17b2be,#2ab8c1,#44c1c4,#61cbc8,#82d6d0,#a4e2db,#c5ece8,#e1f1f1,#f3f1f3,#faecef,#fae6e6,#f9e0de,#f8d8d7,#f8cdcd,#f7c0be,#f7b2ae,#f7a49d,#f7968e,#f58883,#f37c7b,#f17275,#f16c6f,#f1696b,#f16868,#f26664,#f26460,#f25f58,#f2584e,#f15143,#f04b38,#f04730,#f04529,#f04423,#f0421d,#f04119,#f04018,#f03f19,#f03f1b)"></i><i style="left:22px;top:171px;width:148px;background:linear-gradient(90deg,#00a69a,#00a698,#00a699,#00a79a,#00a79c,#00a89f,#01a8a3,#02a9a8,#04aaae,#07abb5,#0aadba,#0fafbe,#1bb4c2,#32bbc4,#4ec4c7,#6ccecb,#8edad5,#b1e6e1,#d1eeed,#e8f1f3,#f6eef2,#fae8ec,#fae2e4,#f8dbdd,#f8d3d6,#f7c8cb,#f7babc,#f7acab,#f79e9a,#f6908c,#f48382,#f2777a,#f16d74,#f0686f,#f1666b,#f16468,#f26264,#f2605f,#f25b58,#f1544d,#f14d42,#f04839,#f04531,#f0442a,#f04224,#f0401e,#f03f1a,#f03e19,#f03e1a,#f03d1c)"></i><i style="left:22px;top:172px;width:149px;background:linear-gradient(90deg,#00a69c,#00a69a,#00a69a,#00a79b,#00a79d,#01a8a0,#01a9a4,#03a9aa,#05aab1,#07acb7,#0aadbc,#10afc1,#1cb4c4,#33bbc7,#4ec5c9,#6ccfcd,#8edad6,#b1e5e3,#d1eeee,#e7f0f3,#f4ecf2,#f9e6ec,#f9e0e4,#f8dade,#f7d2d8,#f7c8cf,#f7bcc1,#f7aeb1,#f7a0a1,#f69291,#f58586,#f2787e,#f16e77,#f06771,#f0646d,#f1616a,#f16067,#f25e63,#f25b5d,#f25555,#f14f4a,#f04940,#f04538,#f04331,#f0422b,#f04024,#f03f1e,#f03d1b,#f03d1a,#f03c1b,#f03c1d)"></i><i style="left:23px;top:173px;width:148px;background:linear-gradient(90deg,#00a69d,#00a69b,#00a79b,#00a79d,#00a89f,#01a8a3,#03a9a9,#04aaaf,#07abb6,#09adbd,#0eaec2,#18b2c5,#2bb9c8,#47c2cb,#64ccce,#84d7d5,#a8e3e1,#caeced,#e3eff3,#f2ecf2,#f8e5ec,#f9dee5,#f8d8de,#f7d1d9,#f7c8d2,#f6bdc6,#f6afb7,#f6a1a6,#f69396,#f5858a,#f37881,#f16d7a,#f06673,#f0616e,#f05f6b,#f15d68,#f15b64,#f15860,#f15458,#f14d4e,#f04844,#f0443c,#f04235,#f0412e,#f03f28,#f03d21,#f03c1c,#f03b1a,#f03b1b,#f03a1d)"></i><i style="left:23px;top:174px;width:149px;background:linear-gradient(90deg,#00a79e,#00a79c,#00a79c,#00a79e,#01a8a0,#02a9a5,#03aaab,#05abb2,#07acb9,#0aadbf,#0eafc4,#19b3c8,#2dbacb,#48c3cd,#65ccd0,#84d7d6,#a7e2e2,#c9ebed,#e2eef3,#f0eaf1,#f7e3ec,#f9dce5,#f8d6df,#f7cfd9,#f7c7d4,#f6bdca,#f6b0bc,#f6a2ac,#f6949c,#f5878f,#f37a85,#f16e7e,#f06676,#f06070,#f05d6d,#f05b6a,#f15967,#f15763,#f1535e,#f14e56,#f0494c,#f04443,#f0423c,#f04035,#f03f2e,#f03d28,#f03c21,#f03a1d,#f03a1b,#f03a1c,#f0391e)"></i><i style="left:23px;top:175px;width:150px;background:linear-gradient(90deg,#00a79f,#00a79d,#00a79d,#00a89f,#01a8a2,#02a9a7,#04aaae,#06abb5,#08acbc,#0badc2,#10b0c7,#1db4cb,#34bcce,#50c5d0,#6dcfd3,#8ddada,#b1e5e6,#d2ecf0,#e7ecf3,#f2e6ef,#f7dee9,#f8d7e2,#f8d0dc,#f7c9d7,#f6c1d1,#f6b6c8,#f5aaba,#f59caa,#f58e9a,#f4818e,#f27485,#f16a7d,#f06275,#f05d70,#f05a6d,#f0576a,#f05567,#f15363,#f14f5d,#f14a55,#f0464c,#f04244,#f0403d,#f03f36,#f03d2f,#f03c28,#f03a22,#f0391d,#f0391c,#f0381d,#f0381f)"></i><i style="left:23px;top:176px;width:151px;background:linear-gradient(90deg,#00a7a1,#00a79f,#00a79e,#01a8a0,#01a9a4,#03a9aa,#05aab1,#07abb8,#09adbf,#0caec6,#13b1cb,#23b6ce,#3cbfd1,#59c8d3,#76d2d7,#96dcde,#bae7ea,#d8ecf2,#eae9f2,#f3e2ec,#f7d9e5,#f8d2df,#f7cbda,#f6c3d4,#f6bace,#f5b0c5,#f5a4b7,#f596a7,#f48898,#f37b8d,#f16f84,#f0657c,#f05e74,#f0596f,#f0576c,#f05469,#f05266,#f14f63,#f14c5d,#f04755,#f0434d,#f04145,#f03f3e,#f03d37,#f03c30,#f03a29,#f03922,#f0381e,#f0381d,#f0371e,#f03720)"></i><i style="left:23px;top:177px;width:151px;background:linear-gradient(90deg,#00a7a2,#00a7a0,#00a8a0,#01a8a2,#02a9a6,#04aaac,#06abb4,#08acbb,#0aadc2,#0daec9,#16b2ce,#28b8d1,#42c1d4,#5fcad6,#7bd4d9,#9bdee1,#bfe8ec,#dbebf2,#ebe6f0,#f3deea,#f7d5e3,#f7cedd,#f7c6d8,#f6bed2,#f5b6cc,#f5acc4,#f5a0b7,#f492a7,#f48499,#f2778e,#f16c85,#f0627c,#f05b74,#f05770,#f0546d,#f0516a,#f04f67,#f04c63,#f0495e,#f04557,#f0424f,#f03f48,#f03e41,#f03c39,#f03b32,#f0392b,#f03824,#f03720,#f0371e,#f0371f,#f03620)"></i><i style="left:23px;top:178px;width:152px;background:linear-gradient(90deg,#00a7a4,#00a7a2,#00a8a1,#01a8a3,#02a9a8,#04aaaf,#06abb6,#08acbd,#0aadc4,#0eafcb,#17b2d0,#29b8d3,#44c1d6,#60cbd8,#7cd4db,#9adee2,#bce7ec,#d9e9f2,#e9e4f0,#f1dcea,#f5d4e3,#f7ccdd,#f7c4d7,#f6bcd2,#f5b3cd,#f5aac6,#f4a0bb,#f493ad,#f4859e,#f27893,#f16d8a,#f06380,#f05b78,#f05672,#f0536e,#f0506b,#f04d69,#f04b66,#f04862,#f0455d,#f04256,#f03f4e,#f03e47,#f03c40,#f03b39,#f03931,#f0382a,#f03724,#f03620,#f03620,#f03620,#f03521)"></i><i style="left:24px;top:179px;width:152px;background:linear-gradient(90deg,#00a8a5,#00a8a3,#01a8a3,#02a9a6,#04aaac,#06abb3,#08acbb,#0aadc2,#0caec9,#12b0cf,#20b5d4,#37bdd7,#54c7d9,#6fd0dc,#8ad9e0,#aae2e8,#cae8f0,#e1e6f1,#eddeec,#f3d5e5,#f6cddf,#f6c5d9,#f6bcd4,#f5b4ce,#f5acc9,#f4a3c1,#f498b7,#f38ba8,#f37d9b,#f17190,#f06787,#f05e7e,#f05776,#f05271,#f04f6e,#f04c6b,#f04a68,#f04765,#f04461,#f0425c,#f04055,#f03e4e,#f03c47,#f03b3f,#f03938,#f03830,#f03729,#f03624,#f03522,#f03521,#f03522,#f03521)"></i><i style="left:24px;top:180px;width:153px;background:linear-gradient(90deg,#00a8a7,#01a8a5,#02a9a5,#03a9a9,#05aaaf,#07abb6,#09acbd,#0badc5,#0eafcc,#15b1d2,#25b7d7,#3fc0da,#5cc9dc,#77d2df,#92dbe3,#b2e4eb,#d0e7f1,#e4e2f0,#eed9e9,#f3d1e3,#f5c8dc,#f6bfd6,#f5b7d1,#f5aecb,#f4a5c6,#f49cbf,#f391b4,#f385a6,#f2789a,#f16c90,#f06286,#f05a7c,#f05375,#f04f70,#f04c6d,#f0496b,#f04668,#f04465,#f04161,#f0405c,#f03e55,#f03c4e,#f03b47,#f03a3f,#f03837,#f03730,#f03629,#f03525,#f03523,#f03523,#f03423,#f03421)"></i><i style="left:24px;top:181px;width:153px;background:linear-gradient(90deg,#01a8a9,#01a8a7,#02a9a7,#04aaab,#05abb1,#07acb8,#0aadc0,#0caec7,#0fafce,#17b2d4,#2ab9d9,#45c2dc,#61cbdf,#7cd4e2,#97dde6,#b6e4ed,#d2e5f1,#e4dfee,#eed5e7,#f2cde1,#f4c4db,#f5bcd5,#f5b2cf,#f4a9c9,#f4a1c4,#f398bd,#f38db3,#f281a7,#f2749a,#f16990,#f06087,#f0577d,#f05075,#f04c71,#f0496e,#f0466b,#f04468,#f04165,#f03f61,#f03e5d,#f03d57,#f03c50,#f03a48,#f03941,#f03739,#f03632,#f0352b,#f03427,#f03425,#f03424,#f03424,#f03322)"></i><i style="left:24px;top:182px;width:154px;background:linear-gradient(90deg,#01a8ab,#02a9aa,#03a9a9,#04aaad,#06abb3,#08acbb,#0aadc2,#0daec9,#10b0d0,#1bb3d7,#30bbdb,#4dc4df,#69cee2,#83d6e4,#9fdfe9,#bde4ef,#d6e2f1,#e6daec,#eed1e5,#f2c8de,#f4c0d8,#f4b7d2,#f4adcc,#f4a4c7,#f39bc1,#f392ba,#f287b1,#f27ba5,#f16f99,#f0648f,#f05b85,#f0537c,#f04d74,#f04970,#f0466d,#f0436b,#f04167,#f03e64,#f03d61,#f03c5c,#f03c57,#f03a50,#f03948,#f03840,#f03638,#f03531,#f0342b,#f03428,#f03326,#f03326,#f03324,#f03322)"></i><i style="left:24px;top:183px;width:155px;background:linear-gradient(90deg,#01a9ad,#03a9ac,#04aaac,#05abaf,#07acb5,#09adbc,#0baec4,#0dafcb,#11b0d2,#1cb4d8,#32bbdd,#4ec4e0,#6acee3,#84d6e6,#9edeea,#bae3f0,#d4e1f0,#e4d8eb,#edcfe4,#f1c6de,#f3bed8,#f3b6d2,#f3accc,#f3a3c7,#f399c1,#f290bb,#f287b3,#f27ba9,#f1709e,#f06593,#f05c89,#f05480,#f04c77,#f04872,#f0456f,#f0426c,#f03f69,#f03d66,#f03c62,#f03b5f,#f03b5b,#f03a55,#f0394e,#f03846,#f0363e,#f03537,#f03430,#f0332c,#f03329,#f03328,#f03327,#f03224,#f03221)"></i><i style="left:24px;top:184px;width:156px;background:linear-gradient(90deg,#02a9b0,#03aaaf,#05aaae,#06abb1,#08acb7,#0aadbe,#0caec6,#0eafcd,#13b1d4,#20b5da,#38bddf,#55c7e2,#70d0e6,#8ad8e9,#a5e0ed,#c0e3f1,#d7ddef,#e6d3e9,#edcae2,#f1c2db,#f2bad6,#f2b1d0,#f2a7ca,#f29ec4,#f294be,#f28ab8,#f181b1,#f176a7,#f16b9c,#f06192,#f05888,#f04f7e,#f04976,#f04472,#f0426f,#f03f6c,#f03c69,#f03b65,#f03a61,#f03a5e,#f03a5a,#f03954,#f0384d,#f03745,#f0353e,#f03436,#f03331,#f0332d,#f0322b,#f0322a,#f03228,#f03224,#f03121)"></i><i style="left:25px;top:185px;width:155px;background:linear-gradient(90deg,#04aab2,#05aab1,#06abb1,#08acb5,#09adbb,#0baec2,#0dafca,#10b0d1,#17b2d7,#2ab9dc,#44c1e1,#60cae5,#7ad3e8,#94dbec,#afe1f0,#c8e0f1,#dcd8ec,#e8cde5,#eec4de,#f0bcd8,#f1b4d3,#f1accd,#f1a2c7,#f198c2,#f18ebc,#f185b6,#f17bae,#f170a5,#f0669b,#f05d91,#f05487,#f04c7d,#f04576,#f04272,#f03f6f,#f03c6c,#f03a68,#f03964,#f03861,#f0385e,#f0395b,#f03855,#f0374e,#f03647,#f0343f,#f03338,#f03232,#f0322f,#f0322c,#f0322b,#f03129,#f03125,#f03121)"></i><i style="left:25px;top:186px;width:154px;background:linear-gradient(90deg,#05aab5,#06abb4,#07acb4,#08acb7,#0aadbe,#0caec5,#0eafcc,#11b0d3,#1bb4d9,#31bbde,#4cc3e3,#66cce6,#80d4ea,#9cddee,#b6e1f1,#cedcef,#dfd2e9,#eac7e2,#eebfdb,#efb7d5,#f0afd0,#f0a6ca,#f09cc4,#f092be,#f088b8,#f07eb2,#f074aa,#f06aa1,#f06098,#f0578e,#f04e84,#f0467a,#f04174,#f03e71,#f03b6e,#f0396a,#f03766,#f03662,#f03760,#f0375d,#f03859,#f03753,#f0364b,#f03444,#f0333c,#f03236,#f03132,#f0312f,#f0312d,#f0312b,#f03127,#f03123)"></i><i style="left:25px;top:187px;width:152px;background:linear-gradient(90deg,#06abb7,#07acb7,#08acb6,#09adb9,#0baebf,#0daec6,#0fafcd,#12b1d4,#1cb4da,#32bbdf,#4cc3e3,#64cae7,#7dd3eb,#99dbef,#b3dff1,#cbdbef,#dcd0e9,#e8c6e1,#edbddb,#eeb5d5,#eeaed0,#eea5ca,#ef9cc5,#ef92bf,#ef88b9,#ef7eb3,#f074ac,#f06aa4,#f0619b,#f05892,#f04f88,#f0477e,#f04077,#f03c72,#f03a6f,#f0386c,#f03668,#f03564,#f03561,#f0365e,#f0365c,#f03658,#f03651,#f0344a,#f03342,#f0323b,#f03136,#f03133,#f03130,#f0302e,#f0302b,#f03027)"></i><i style="left:25px;top:188px;width:151px;background:linear-gradient(90deg,#07acba,#08acb9,#09adb9,#0aadbb,#0caec1,#0eafc8,#0fb0cf,#14b1d6,#21b6dc,#39bde0,#51c5e4,#68cbe7,#81d3ec,#9edcf0,#b9ddf1,#cfd6ec,#e0cae5,#e9c0de,#edb7d8,#edb0d2,#eda8cd,#ed9fc7,#ee96c1,#ee8bbb,#ee81b5,#ef77af,#ef6da8,#f064a0,#f05b98,#f0528e,#f04984,#f0417b,#f03c75,#f03971,#f0366e,#f0356a,#f03466,#f03362,#f0345f,#f0355e,#f0355b,#f03555,#f0344e,#f03347,#f03140,#f0313a,#f03036,#f03033,#f03031,#f0302e,#f0302a)"></i><i style="left:25px;top:189px;width:149px;background:linear-gradient(90deg,#08acbc,#09adbc,#0aadbb,#0baebd,#0daec3,#0eafca,#10b0d0,#14b1d7,#22b6dc,#39bde1,#50c4e4,#64c9e7,#7cd1eb,#99d9f0,#b5dbf0,#cbd4ec,#ddc9e5,#e7bede,#ecb5d7,#ecaed2,#eca7cd,#ec9fc8,#ec95c2,#ed8bbc,#ed81b6,#ee77b0,#ee6ea9,#ef64a2,#ef5b9a,#f05392,#f04a88,#f0427f,#f03b78,#f03873,#f0356f,#f0336c,#f03267,#f03263,#f03260,#f0335e,#f0345d,#f03459,#f03454,#f0334d,#f03145,#f0303f,#f0303a,#f03037,#f02f34,#f02f32,#f02f2e)"></i><i style="left:25px;top:190px;width:147px;background:linear-gradient(90deg,#09acbf,#0aadbf,#0badbe,#0caec0,#0dafc5,#0fafcb,#10b0d2,#16b2d8,#27b7de,#3ebee2,#52c4e5,#64c8e7,#7dd0ec,#9bd8f0,#b6d8ef,#cccfea,#dec3e2,#e8b9db,#ebb1d5,#ebaad0,#eba2cb,#eb9ac5,#eb91bf,#ec87b9,#ed7db3,#ed73ad,#ee69a7,#ef60a0,#ef5798,#f04e8f,#f04686,#f03e7d,#f03877,#f03572,#f0336e,#f0316a,#f03066,#f03062,#f0315f,#f0325e,#f0335c,#f03359,#f03353,#f0324c,#f03045,#f0303f,#f02f3b,#f02f38,#f02f35,#f02f32)"></i><i style="left:26px;top:191px;width:145px;background:linear-gradient(90deg,#0aadc1,#0badc1,#0caec1,#0dafc3,#0eafc9,#10b0d0,#13b1d6,#1eb4dc,#32bbe0,#48c1e4,#59c4e6,#6cc9e9,#87d2ed,#a5d6ef,#bfd1ec,#d4c6e4,#e3bbdd,#e9b2d7,#eaaad1,#eaa3cc,#ea9bc7,#ea93c1,#eb89bb,#eb7fb5,#ec75af,#ed6ba8,#ee61a2,#ef589b,#ef5093,#f0478a,#f03f81,#f0387a,#f03474,#f03170,#f0306c,#f02f67,#f02f63,#f02f60,#f0305e,#f0315d,#f0325b,#f03257,#f03150,#f03049,#f02f43,#f02f3f,#f02f3b,#f02e38,#f02e35)"></i><i style="left:26px;top:192px;width:143px;background:linear-gradient(90deg,#0badc3,#0caec3,#0daec3,#0eafc5,#0fafca,#10b0d1,#13b1d7,#1fb5dc,#33bbe1,#47c0e4,#55c2e5,#66c6e8,#80ceec,#9ed3ee,#b8ceeb,#cec4e4,#dfb9dd,#e8b0d7,#e9a9d1,#eaa2cc,#e99bc7,#e993c2,#ea89bc,#eb7fb5,#ec75af,#ec6ba9,#ed62a3,#ee599c,#ef5095,#ef488d,#f04085,#f0387d,#f03377,#f03072,#f02f6e,#f02e69,#f02d65,#f02d61,#f02e5f,#f02f5e,#f0305c,#f0315a,#f03155,#f0304f,#f02f48,#f02e43,#f02e40,#f02e3c,#f02e39)"></i><i style="left:26px;top:193px;width:141px;background:linear-gradient(90deg,#0cadc5,#0daec5,#0eafc5,#0eafc7,#0fb0cc,#10b0d2,#15b2d8,#22b6de,#36bce2,#48bfe4,#55c1e5,#66c5e8,#81ccec,#9ecfed,#b8c9e8,#cfbee1,#e0b4da,#e7acd4,#e9a5cf,#e99eca,#e997c5,#e98ebf,#e985b9,#ea7bb3,#eb70ad,#ec67a7,#ed5da0,#ee5499,#ee4c92,#ef448a,#ef3b82,#f0347b,#f03076,#f02e71,#f02d6d,#f02d68,#f02c64,#f02c61,#f02d5f,#f02e5d,#f02f5c,#f03059,#f03055,#f02f4e,#f02e48,#f02e44,#f02e41,#f02e3d)"></i><i style="left:26px;top:194px;width:140px;background:linear-gradient(90deg,#0cadc8,#0daec8,#0eafc8,#0fafc9,#10b0ce,#11b0d3,#16b2d9,#24b6de,#37bbe2,#46bee4,#52bfe5,#62c3e7,#7cc9eb,#99ccec,#b3c5e7,#cabbe0,#ddb1d9,#e6aad4,#e8a3cf,#e89cca,#e895c5,#e88dbf,#e983b9,#ea79b3,#eb6fac,#ec65a6,#ed5ca0,#ed5399,#ee4b92,#ef438b,#ef3b83,#ef347c,#f02f77,#f02e72,#f02d6e,#f02c69,#f02b65,#f02b61,#f02b5f,#f02d5e,#f02e5c,#f02f5b,#f02f57,#f02e52,#f02e4c,#f02d47,#f02d44,#f02d40)"></i><i style="left:26px;top:195px;width:138px;background:linear-gradient(90deg,#0dadca,#0eaeca,#0fafca,#0fafcb,#10b0cf,#11b0d5,#18b2db,#27b7df,#39bbe2,#46bde4,#50bee5,#61c1e7,#7cc7eb,#98c8ea,#b2c0e4,#cab5dd,#ddadd7,#e6a6d2,#e79fcd,#e898c8,#e891c3,#e889bd,#e87fb7,#e975b0,#eb6baa,#ec61a4,#ec579d,#ed4f96,#ee478f,#ee3e88,#ef3781,#ef317b,#f02e76,#f02c72,#f02c6d,#f02b68,#f02a64,#f02a61,#f02b5f,#f02c5e,#f02d5c,#f02e5a,#f02e57,#f02d51,#f02d4c,#f02d48,#f02d44)"></i><i style="left:27px;top:196px;width:135px;background:linear-gradient(90deg,#0eaecd,#0faecc,#0fafcc,#10b0ce,#10b0d3,#13b1d8,#1eb4dd,#2eb8e1,#3dbbe3,#47bbe4,#52bce5,#67c1e8,#83c5ea,#9ec1e7,#b8b8e0,#cfaed9,#dfa7d4,#e6a1cf,#e79aca,#e794c5,#e78cc0,#e883ba,#e879b3,#e96ead,#eb64a6,#eb5ba0,#ec5299,#ed4992,#ee418b,#ee3984,#ef327e,#ef2e79,#f02c75,#f02c71,#f02b6c,#f02a68,#f02a64,#f02a61,#f02a5f,#f02b5e,#f02c5c,#f02d5a,#f02d56,#f02d51,#f02c4d,#f02c49)"></i><i style="left:27px;top:197px;width:134px;background:linear-gradient(90deg,#0faecf,#0faece,#10afce,#10b0d0,#10b0d4,#14b1d9,#1eb4de,#2eb8e1,#3bbae3,#44bae4,#4fbae5,#62bee7,#7dc2e9,#99bee6,#b2b4df,#cbabd8,#dda4d3,#e59fcf,#e799ca,#e792c5,#e78bc0,#e783ba,#e878b3,#e96dad,#ea63a6,#eb5aa0,#ec5199,#ec4892,#ed408b,#ee3885,#ee317f,#ef2d7a,#f02c77,#f02c73,#f02b6e,#f02a6a,#f02a65,#f02a62,#f02a60,#f02a5f,#f02b5d,#f02c5b,#f02c58,#f02c54,#f02c50,#f02c4c)"></i><i style="left:27px;top:198px;width:132px;background:linear-gradient(90deg,#0faed1,#0faed0,#10afd0,#10b0d2,#11b0d6,#15b1db,#20b4df,#2fb7e2,#3ab8e3,#43b8e3,#4eb9e4,#62bde7,#7dbfe8,#98b9e3,#b2afdc,#cba6d6,#dca0d1,#e49bcd,#e696c9,#e68fc4,#e788be,#e77fb8,#e874b1,#e969aa,#ea5fa4,#eb559d,#ec4c96,#ec448f,#ed3c89,#ed3582,#ee2f7d,#ef2c79,#f02c77,#f02c73,#f02b6e,#f02a69,#f02a66,#f02a63,#f02a61,#f02a5f,#f02b5d,#f02b5b,#f02c58,#f02b54,#f02b50)"></i><i style="left:27px;top:199px;width:130px;background:linear-gradient(90deg,#0faed2,#10aed2,#10afd2,#10b0d4,#11b0d7,#16b2dc,#22b4e0,#2fb6e2,#39b6e3,#41b6e3,#4db7e4,#62bae6,#7dbbe6,#98b3e1,#b3aada,#cca2d3,#dc9ccf,#e498cb,#e692c7,#e68cc2,#e684bd,#e77bb6,#e86faf,#e964a8,#ea5aa1,#eb519a,#eb4893,#ec408d,#ec3886,#ed3180,#ee2c7c,#ef2b79,#f02c77,#f02c73,#f02b6e,#f02a69,#f02a66,#f02a63,#f02a61,#f02a5f,#f02b5d,#f02b5b,#f02b58,#f02b54)"></i><i style="left:27px;top:200px;width:129px;background:linear-gradient(90deg,#10aed4,#10aed4,#10afd4,#10afd6,#11b0d9,#16b1dd,#21b4e0,#2db5e2,#36b5e2,#3eb4e3,#49b5e4,#5db7e6,#78b7e5,#93b0df,#aea6d8,#c79fd2,#d99ace,#e296cb,#e591c7,#e68ac2,#e683bd,#e67ab7,#e76faf,#e864a8,#e959a1,#ea509a,#eb4793,#eb3f8d,#ec3787,#ec3081,#ed2c7c,#ee2a7a,#ef2c78,#f02c75,#f02b70,#f02b6c,#f02a68,#f02a65,#f02a63,#f02a61,#f02a5f,#f02b5d,#f02b5a,#f02b57)"></i><i style="left:28px;top:201px;width:126px;background:linear-gradient(90deg,#10aed5,#10aed6,#10afd7,#10afd8,#13b0db,#1ab2df,#25b3e1,#2eb3e2,#36b3e2,#3fb2e3,#4cb3e4,#63b5e5,#7eb1e2,#99a8db,#b59fd4,#cc99cf,#db95cc,#e292c9,#e58cc4,#e686c0,#e67eba,#e674b3,#e769ac,#e85da4,#e9539d,#ea4a97,#ea4290,#eb3a8a,#eb3384,#ec2d7e,#ed2a7b,#ee2a7a,#ef2c78,#f02c74,#f02c70,#f02b6c,#f02a68,#f02a66,#f02a64,#f02a62,#f02b5f,#f02b5d,#f02b5a)"></i><i style="left:28px;top:202px;width:124px;background:linear-gradient(90deg,#10add6,#10aed7,#10afd8,#10afda,#13b0dd,#1ab1df,#24b2e1,#2db1e2,#34b1e2,#3db0e2,#4bb1e3,#63b2e3,#7eacdf,#9aa3d9,#b69bd2,#cd95cd,#da92ca,#e28ec7,#e589c3,#e582be,#e57ab8,#e670b1,#e764a9,#e859a2,#e94f9b,#ea4694,#ea3e8e,#eb3788,#eb3082,#ec2a7d,#ed297b,#ee2b7a,#f02c78,#f02c74,#f02c70,#f02b6c,#f02b69,#f02b67,#f02b64,#f02b62,#f02b60,#f02b5d)"></i><i style="left:28px;top:203px;width:123px;background:linear-gradient(90deg,#10add8,#10add9,#10aeda,#10afdb,#13afdd,#19b0e0,#22b0e1,#2ab0e1,#31afe2,#3aaee2,#47afe3,#5eaee2,#79a9de,#95a0d7,#b198d1,#c892cc,#d78fc9,#df8cc6,#e487c2,#e581be,#e579b8,#e670b2,#e664aa,#e759a2,#e84e9b,#e94695,#ea3e8e,#ea3788,#ea2f82,#eb2a7e,#ec287b,#ee2a7a,#ef2c79,#f02d77,#f02c72,#f02c6e,#f02b6b,#f02b69,#f02b66,#f02b64,#f02b62,#f02b5f)"></i><i style="left:28px;top:204px;width:121px;background:linear-gradient(90deg,#10acd9,#10adda,#10aedb,#10aedd,#13afde,#18afe0,#20afe0,#28aee1,#2fade1,#38ace2,#46ace2,#5eabe1,#79a4dc,#979bd5,#b393cf,#c98eca,#d68bc7,#df88c5,#e384c1,#e57ebc,#e576b7,#e56cb0,#e660a8,#e754a0,#e84b99,#e94393,#e93b8d,#ea3386,#ea2c81,#eb287c,#ec277b,#ee2a7b,#ef2c7a,#f02d77,#f02c72,#f02c6e,#f02b6c,#f02b69,#f02b67,#f02b65,#f02b62)"></i><i style="left:28px;top:205px;width:119px;background:linear-gradient(90deg,#10acda,#10acdb,#10addc,#10addd,#12aede,#17addf,#1eade0,#25ace0,#2cabe1,#34aae1,#41aae1,#57a8e0,#72a2db,#8f99d5,#ab91ce,#c28bca,#d188c6,#db86c4,#e183c1,#e47dbd,#e476b8,#e56db1,#e662aa,#e756a2,#e84d9b,#e94595,#e93d8f,#e93689,#e92e83,#ea287e,#eb267b,#ed287b,#ee2b7b,#ef2d79,#f02d76,#f02c72,#f02c6f,#f02c6c,#f02c6a,#f02c67,#f02c65)"></i><i style="left:29px;top:206px;width:117px;background:linear-gradient(90deg,#10abdc,#10acdd,#10acde,#10acde,#13acdf,#18acdf,#1eabe0,#25aae0,#2da9e1,#36a8e1,#47a6e0,#60a2dd,#7d9ad7,#9a92d0,#b58aca,#c886c6,#d484c4,#dc82c2,#e27ebe,#e478ba,#e470b4,#e565ad,#e65aa5,#e7509e,#e84898,#e94092,#e9398c,#e93186,#e92a80,#ea267c,#eb277b,#ed297b,#ef2c7b,#f02d78,#f02d75,#f02c71,#f02c6e,#f02c6c,#f02c69,#f02c67)"></i><i style="left:29px;top:207px;width:115px;background:linear-gradient(90deg,#10aadd,#10abdd,#10abde,#10abdf,#12abdf,#17aadf,#1da9df,#24a8e0,#2ba7e0,#35a5e0,#46a3df,#609ddb,#7e95d4,#9c8dce,#b686c8,#c782c5,#d380c2,#dc7ec0,#e17abc,#e374b8,#e46cb2,#e561ab,#e656a3,#e74d9c,#e84697,#e93f91,#e9378b,#e92f84,#e9287f,#ea257c,#ec277b,#ee2a7c,#ef2d7b,#f02d78,#f02d75,#f02d71,#f02d6f,#f02c6c,#f02c6a)"></i><i style="left:29px;top:208px;width:113px;background:linear-gradient(90deg,#10aadd,#10aade,#10aade,#10aade,#11a9de,#15a8df,#1aa7df,#21a6df,#28a5e0,#31a3e0,#40a1de,#599bda,#7693d4,#948bcd,#af84c8,#c17fc4,#cd7dc1,#d77cbf,#df79bd,#e274b9,#e46db3,#e463ad,#e558a5,#e64f9e,#e84899,#e94294,#e93b8e,#e93388,#e92b82,#e9267e,#eb267c,#ec287c,#ee2b7c,#ef2d7b,#f02e78,#f02d75,#f02d72,#f02d6f,#f02d6d)"></i><i style="left:29px;top:209px;width:112px;background:linear-gradient(90deg,#10a9de,#10a9de,#10a9de,#10a8de,#11a7de,#14a6de,#1aa5de,#20a4df,#27a3df,#31a1df,#429ddc,#5d96d7,#7b8dd1,#9985ca,#b27fc5,#c37bc2,#ce7abf,#d878bd,#df75ba,#e26fb6,#e367b0,#e45da9,#e552a2,#e74b9c,#e94697,#e94092,#e9388c,#e93085,#e92980,#ea267d,#eb277c,#ed2a7d,#ef2c7c,#f02e7a,#f02e77,#f02d74,#f02d71,#f02d6f)"></i><i style="left:30px;top:210px;width:109px;background:linear-gradient(90deg,#10a8de,#10a7de,#10a7de,#10a6de,#11a5de,#15a4de,#1aa3de,#21a1de,#28a0de,#349ddd,#4997d9,#668fd3,#8487cd,#a17fc7,#b77ac2,#c477bf,#cf76bd,#d974bb,#df70b8,#e26bb3,#e362ad,#e457a6,#e64fa0,#e84a9b,#e94596,#ea3e91,#ea368a,#e92e84,#ea287f,#ea277d,#ec287d,#ed2b7d,#ef2d7d,#f02e7a,#f02e77,#f02e74,#f02d72)"></i><i style="left:30px;top:211px;width:107px;background:linear-gradient(90deg,#10a7de,#10a6de,#10a5de,#10a4de,#11a3dd,#13a2dd,#18a1dd,#1ea0de,#259ede,#2f9bdd,#4295d9,#5e8dd3,#7c85cd,#997dc6,#b077c2,#bf74bf,#ca73bc,#d471ba,#dc6fb8,#e16ab4,#e363af,#e459a8,#e551a2,#e74b9d,#e94899,#ea4394,#ea3b8e,#ea3388,#ea2c83,#ea287f,#eb287e,#ec2a7e,#ee2c7e,#ef2e7d,#f02e7a,#f02e77,#f02e75)"></i><i style="left:30px;top:212px;width:106px;background:linear-gradient(90deg,#10a5de,#10a4de,#10a3de,#10a2dd,#11a1dd,#13a0dc,#179fdd,#1e9edd,#259bdd,#3097db,#4590d6,#6288d0,#817fc9,#9e78c3,#b373bf,#c070bc,#ca6fba,#d46db8,#dd6bb6,#e166b2,#e35dac,#e454a5,#e64d9f,#e84a9c,#e94698,#ea4093,#ea388c,#ea3086,#ea2b82,#eb297f,#ec2a7f,#ed2b7f,#ef2e7e,#f02f7c,#f02f7a,#f02e77)"></i><i style="left:30px;top:213px;width:104px;background:linear-gradient(90deg,#10a4de,#10a2de,#10a1dd,#10a0dd,#109fdc,#129edc,#169ddc,#1b9cdc,#229adc,#2c95da,#3f8ed6,#5a86d0,#797ec9,#9676c3,#ac70be,#ba6ebc,#c56cba,#cf6ab8,#d869b5,#df65b2,#e25fad,#e356a7,#e54fa1,#e74b9d,#e9499a,#ea4596,#eb3e90,#eb368a,#eb2f85,#eb2b81,#ec2a80,#ed2b7f,#ee2d7f,#ef2f7f,#f02f7d,#f02f7a)"></i><i style="left:31px;top:214px;width:101px;background:linear-gradient(90deg,#10a1de,#10a0dd,#109fdd,#109edc,#109ddc,#129cdb,#169bdb,#1c99db,#2396da,#2f90d7,#4588d2,#6380cc,#8177c5,#9c70c0,#af6cbc,#bb6ab9,#c668b7,#d067b5,#d965b3,#df61b0,#e25aab,#e352a5,#e54da0,#e74a9d,#ea4899,#eb4495,#eb3c8f,#eb3489,#eb2f85,#eb2c82,#ec2c81,#ed2d80,#ee2e80,#ef2f7f,#f02f7d)"></i><i style="left:31px;top:215px;width:100px;background:linear-gradient(90deg,#109fdd,#109edd,#109ddc,#109cdc,#109bdb,#129adb,#1698db,#1c96da,#2492d9,#318bd5,#4983cf,#687ac9,#8672c2,#a06bbd,#b168b9,#bc66b7,#c765b5,#d163b3,#da61b1,#df5cad,#e255a8,#e44fa3,#e64c9f,#e84a9c,#ea4798,#eb4193,#eb398d,#eb3388,#ec2f84,#ec2e82,#ed2e82,#ee2f81,#ef3080,#f0307e)"></i><i style="left:31px;top:216px;width:98px;background:linear-gradient(90deg,#109ddd,#109cdc,#109bdc,#109adb,#1099db,#1198da,#1496da,#1a94d9,#2190d8,#2c89d4,#4181cf,#5f79c9,#7d70c2,#986abc,#aa66b9,#b764b6,#c162b4,#cb60b3,#d55fb0,#dc5bae,#e156a9,#e350a5,#e54da1,#e74b9e,#ea499b,#eb4597,#ec3f91,#ec378b,#ec3287,#ec3085,#ed2f83,#ee3082,#ef3082,#f03181)"></i><i style="left:31px;top:217px;width:96px;background:linear-gradient(90deg,#109bdc,#109adc,#1098db,#1097db,#1096da,#1195da,#1494d9,#1991d8,#208cd6,#2c85d2,#427dcd,#6074c6,#7f6cc0,#9866ba,#aa63b7,#b661b4,#c05fb3,#cb5db1,#d55baf,#dc58ac,#e153a8,#e34fa4,#e64ca0,#e84b9d,#ea499a,#ec4596,#ec3e91,#ec378b,#ec3387,#ed3185,#ed3184,#ee3183,#ef3182)"></i><i style="left:32px;top:218px;width:94px;background:linear-gradient(90deg,#1099dc,#1097db,#1195da,#1194da,#1193d9,#1292d9,#1590d8,#1b8cd6,#2386d3,#327ece,#4d76c8,#6c6dc2,#8967bb,#9f62b7,#ae60b4,#b95eb2,#c35cb0,#ce5aae,#d758ac,#de54a9,#e250a6,#e54da2,#e74c9f,#e94a9c,#eb4799,#ec4294,#ed3b8e,#ed368a,#ed3387,#ee3386,#ee3385,#ef3384)"></i><i style="left:32px;top:219px;width:92px;background:linear-gradient(90deg,#1097db,#1195db,#1192da,#1191d9,#1190d8,#128ed8,#148dd7,#1989d5,#2084d2,#2d7dce,#4474c8,#626cc2,#7f66bc,#9762b6,#a85fb3,#b35db1,#be5baf,#c859ae,#d257ac,#db54aa,#e051a7,#e34ea4,#e64da1,#e84b9e,#ea499b,#ec4697,#ed4092,#ed3a8d,#ed368a,#ee3588,#ee3487,#ef3485)"></i><i style="left:32px;top:220px;width:90px;background:linear-gradient(90deg,#1095db,#1192da,#118fd9,#128dd8,#128cd7,#128ad7,#1489d5,#1985d3,#207fd0,#2d78cc,#4570c6,#6369c0,#8063ba,#9860b5,#a85eb1,#b35bb0,#be59ae,#c957ad,#d355ab,#db52a9,#e150a6,#e44ea3,#e64ca1,#e94b9e,#eb499b,#ed4597,#ed4092,#ed3a8d,#ee388a,#ee3689,#ef3687)"></i><i style="left:32px;top:221px;width:89px;background:linear-gradient(90deg,#1093db,#118fd9,#128cd8,#1289d7,#1387d6,#1386d6,#1584d4,#1881d2,#1e7cce,#2a76ca,#406ec5,#5d67bf,#7a63b9,#9360b4,#a45db1,#b05baf,#bb59ad,#c556ac,#d054ab,#d952a9,#df50a7,#e34fa4,#e64da2,#e84c9f,#ea4a9c,#ec4799,#ed4394,#ee3d90,#ee3a8d,#ee388a,#ef3889)"></i><i style="left:33px;top:222px;width:86px;background:linear-gradient(90deg,#118fda,#128cd8,#1288d7,#1385d6,#1482d5,#1481d4,#167fd2,#1a7bcf,#2076cc,#2e70c7,#4769c2,#6564bc,#8161b7,#985eb3,#a75cb0,#b359ae,#bd57ac,#c854ab,#d252aa,#db51a8,#e050a6,#e44ea4,#e64da1,#e94b9e,#eb4a9b,#ed4798,#ee4294,#ee3e90,#ee3b8d,#ef3a8b)"></i><i style="left:33px;top:223px;width:84px;background:linear-gradient(90deg,#118dd9,#1289d8,#1385d6,#1481d5,#147ed4,#157cd2,#177ad0,#1a77cd,#2072ca,#2f6cc5,#4966c0,#6762bb,#8460b6,#9a5eb2,#a85baf,#b458ad,#be56ac,#c953aa,#d351a9,#dc51a8,#e150a6,#e44ea3,#e74da1,#e94b9e,#ec499b,#ee4697,#ee4293,#ef3e90,#ef3c8e)"></i><i style="left:33px;top:224px;width:83px;background:linear-gradient(90deg,#118bd9,#1287d7,#1382d6,#147ed4,#157bd3,#1678d1,#1775cf,#1a72cc,#1f6fc8,#2c6ac4,#4465c0,#6361bb,#8060b6,#965eb2,#a65baf,#b158ad,#bc55ac,#c653aa,#d051a9,#d950a8,#e050a7,#e34fa4,#e64ea2,#e94c9f,#eb4a9c,#ed4899,#ee4495,#ef4192,#ef3e8f)"></i><i style="left:33px;top:225px;width:81px;background:linear-gradient(90deg,#1189d8,#1285d7,#1380d5,#147bd3,#1577d2,#1774d0,#1871cd,#1b6eca,#206bc7,#2e66c3,#4763be,#6761ba,#845fb6,#995db2,#a75aae,#b257ac,#bd54ab,#c852aa,#d250a9,#da51a8,#e051a6,#e44fa4,#e74ea1,#e94c9f,#ec4a9c,#ee4899,#ef4495,#ef4192)"></i><i style="left:34px;top:226px;width:78px;background:linear-gradient(90deg,#1186d7,#1281d5,#137cd4,#1578d2,#1674d1,#1770ce,#196ccb,#1c6ac8,#2366c4,#3563c1,#5261bd,#7260b9,#8c5eb5,#9d5bb1,#aa58ae,#b555ac,#c053aa,#cb51a9,#d450a8,#dc51a7,#e151a6,#e44fa3,#e74ea1,#ea4c9e,#ec4a9b,#ee4798,#ef4495)"></i><i style="left:34px;top:227px;width:77px;background:linear-gradient(90deg,#1184d6,#1280d5,#137bd3,#1476d2,#1672d0,#176ece,#196acb,#1c67c7,#2264c4,#3362c0,#4f60bd,#6f60ba,#885eb6,#9a5bb1,#a858ae,#b355ac,#bd52aa,#c850a9,#d150a8,#da51a8,#e052a7,#e350a4,#e64fa2,#e94d9f,#eb4b9c,#ee499a,#ef4697)"></i><i style="left:34px;top:228px;width:75px;background:linear-gradient(90deg,#1182d6,#127ed4,#1379d3,#1475d1,#1570d0,#176bcd,#1967ca,#1c64c6,#2462c3,#3760c0,#5560bd,#745fba,#8b5db5,#9c5ab1,#a957ad,#b454ab,#bf51aa,#c950a9,#d350a8,#db52a8,#e052a6,#e451a4,#e74fa1,#e94d9f,#ec4b9c,#ee4999)"></i><i style="left:35px;top:229px;width:72px;background:linear-gradient(90deg,#117fd4,#127ad3,#1376d2,#1472d0,#166dce,#1868cb,#1a64c8,#1e61c4,#295fc1,#425fbf,#6160bc,#7d5eb9,#915cb4,#a058b0,#ac55ad,#b752ab,#c250a9,#cc4fa8,#d550a8,#dc52a7,#e152a6,#e550a3,#e74ea1,#ea4d9e,#ec4b9b)"></i><i style="left:35px;top:230px;width:71px;background:linear-gradient(90deg,#117dd4,#1279d2,#1275d1,#1371d0,#156dce,#1767cb,#1a63c7,#1e5fc4,#295ec1,#405fbf,#5f5fbd,#7a5eba,#8e5cb5,#9d58b0,#a955ad,#b552ab,#bf50aa,#c94fa9,#d250a8,#da52a8,#e053a7,#e352a4,#e650a2,#e94e9f,#eb4c9c)"></i><i style="left:35px;top:231px;width:69px;background:linear-gradient(90deg,#107bd3,#1177d2,#1274d1,#1370d0,#156bce,#1766ca,#1a61c7,#1f5ec3,#2d5dc1,#465ebf,#655fbd,#7e5eb9,#905ab5,#9e57b0,#ab54ac,#b651aa,#c14fa9,#cb4fa8,#d351a8,#db53a8,#e053a6,#e452a4,#e750a1,#e94e9e)"></i><i style="left:35px;top:232px;width:67px;background:linear-gradient(90deg,#1078d2,#1176d1,#1273d0,#136fcf,#146acd,#1764ca,#1a5fc6,#205cc3,#315cc0,#4d5ebf,#6a5ebd,#815db9,#9259b4,#a056af,#ad52ac,#b850aa,#c34ea9,#cc4fa8,#d551a8,#dc54a7,#e154a6,#e552a3,#e74fa1)"></i><i style="left:36px;top:233px;width:65px;background:linear-gradient(90deg,#1076d1,#1173d0,#1171d0,#126dce,#1468cc,#1762c8,#1a5dc5,#225bc2,#355bc0,#515dbf,#6c5ebd,#815cb9,#9059b4,#9e55b0,#ab52ac,#b64faa,#c14ea9,#ca4ea8,#d251a8,#da54a8,#e054a6,#e453a4,#e651a2)"></i><i style="left:36px;top:234px;width:63px;background:linear-gradient(90deg,#1074d0,#1172d0,#116fcf,#126cce,#1466cb,#1760c8,#1b5bc4,#2559c1,#3b5ac0,#575dbf,#705dbc,#835bb8,#9258b4,#a054af,#ad51ab,#b84ea9,#c24da8,#cb4fa8,#d452a8,#db54a8,#e155a6,#e453a4)"></i><i style="left:36px;top:235px;width:61px;background:linear-gradient(90deg,#1072cf,#1070cf,#116ece,#126acd,#1464ca,#175ec7,#1b59c3,#2858c1,#415abf,#5c5cbe,#745cbc,#855ab8,#9456b3,#a253ae,#af4fab,#ba4da9,#c44da8,#cd50a8,#d553a8,#dd55a7,#e255a6)"></i><i style="left:37px;top:236px;width:59px;background:linear-gradient(90deg,#106fce,#106dce,#116bcd,#1267cb,#1461c9,#175cc5,#1d58c2,#2c57c0,#4459be,#5e5bbd,#745bbb,#8459b8,#9356b3,#a052af,#ad4fab,#b84da9,#c14da8,#ca4fa8,#d252a8,#da55a8,#e056a7)"></i><i style="left:37px;top:237px;width:57px;background:linear-gradient(90deg,#106ccd,#106bcd,#1169cc,#1365ca,#155fc8,#175ac4,#1f56c1,#3056bf,#4957bd,#6259bc,#765aba,#8658b7,#9554b2,#a251ae,#af4eaa,#ba4ca9,#c34da8,#cc50a8,#d453a8,#dc56a8)"></i><i style="left:37px;top:238px;width:55px;background:linear-gradient(90deg,#106acc,#1069cc,#1167cb,#1362c9,#155dc6,#1858c3,#2054c0,#3454be,#4d56bc,#6658bb,#7958b9,#8956b6,#9753b1,#a54fad,#b14daa,#bc4ca8,#c54ea8,#ce51a8,#d654a8)"></i><i style="left:38px;top:239px;width:53px;background:linear-gradient(90deg,#1068cb,#1166cb,#1263c9,#135fc7,#155ac5,#1956c2,#2353bf,#3653bc,#4e54ba,#6556ba,#7857b9,#8755b6,#9552b2,#a24fad,#af4daa,#b94ca9,#c24da8,#cb50a8,#d353a8)"></i><i style="left:38px;top:240px;width:51px;background:linear-gradient(90deg,#1065ca,#1164c9,#1261c8,#145dc6,#1558c4,#1954c1,#2551be,#3a51bb,#5253b9,#6855b8,#7a55b7,#8a54b5,#9751b1,#a54ead,#b14caa,#bb4ca8,#c44ea8,#cd51a8)"></i><i style="left:38px;top:241px;width:49px;background:linear-gradient(90deg,#1163c9,#1162c8,#135fc7,#145ac5,#1656c3,#1a52c0,#2850bc,#3d50b9,#5551b7,#6b53b7,#7d54b6,#8d52b3,#9a4faf,#a84cab,#b44ba9,#bd4ca8,#c64fa8)"></i><i style="left:39px;top:242px;width:47px;background:linear-gradient(90deg,#1161c8,#125fc7,#135cc5,#1458c3,#1654c2,#1c51bf,#2a4fbb,#3e4eb7,#544fb6,#6951b6,#7b52b5,#8b51b3,#984fb0,#a54cac,#b04ba9,#ba4ca8,#c34ea8)"></i><i style="left:39px;top:243px;width:45px;background:linear-gradient(90deg,#115fc7,#125dc6,#135ac4,#1456c3,#1653c1,#1d50be,#2d4eb9,#424db6,#574eb4,#6c50b4,#7e51b4,#8e50b2,#9b4dae,#a84bab,#b34aa9,#bd4ca8)"></i><i style="left:39px;top:244px;width:43px;background:linear-gradient(90deg,#115dc6,#125bc5,#1358c3,#1455c2,#1652c0,#1f4fbd,#304cb8,#454bb4,#5a4cb3,#6f4eb3,#824fb3,#914eb0,#9f4cad,#ab4aaa,#b64ba8)"></i><i style="left:40px;top:245px;width:41px;background:linear-gradient(90deg,#125bc5,#1359c4,#1356c2,#1454c1,#1751c0,#214ebc,#324cb7,#464ab3,#594bb2,#6c4cb2,#7f4eb2,#8e4db0,#9c4bad,#a84aaa,#b24aa9)"></i><i style="left:40px;top:246px;width:39px;background:linear-gradient(90deg,#1259c4,#1357c3,#1355c2,#1453c1,#1850bf,#244dbb,#364bb6,#4a49b2,#5d49b1,#704bb1,#824cb1,#924baf,#9f4aac,#ab49a9)"></i><i style="left:41px;top:247px;width:36px;background:linear-gradient(90deg,#1357c2,#1356c2,#1354c1,#1452c0,#1c4fbd,#2b4cb9,#3e49b4,#5148b2,#6448b0,#764ab0,#874bb0,#964aad,#a349ab)"></i><i style="left:41px;top:248px;width:35px;background:linear-gradient(90deg,#1356c2,#1355c1,#1353c1,#1451c0,#1b4fbe,#2a4cb9,#3c49b5,#4f47b2,#6147b0,#7248b0,#8349af,#9249ae,#9f48ab)"></i><i style="left:42px;top:249px;width:32px;background:linear-gradient(90deg,#1354c1,#1353c0,#1352c0,#1650bf,#204ebc,#314ab8,#4448b4,#5746b1,#6846b0,#7847af,#8848ae,#9648ac)"></i><i style="left:42px;top:250px;width:30px;background:linear-gradient(90deg,#1453c0,#1352c0,#1351bf,#174fbe,#234dbb,#364ab8,#4947b4,#5c45b1,#6d45af,#7d46ae,#8c47ad)"></i><i style="left:43px;top:251px;width:28px;background:linear-gradient(90deg,#1451bf,#1350bf,#144fbe,#1c4dbc,#2d4bb9,#4147b6,#5645b2,#6843b0,#7844ae,#8845ad)"></i><i style="left:43px;top:252px;width:26px;background:linear-gradient(90deg,#1550be,#144fbe,#154ebd,#1b4cbc,#294aba,#3b48b7,#4f45b4,#6143b1,#7143af,#7f44ae)"></i><i style="left:44px;top:253px;width:23px;background:linear-gradient(90deg,#154ebd,#154dbc,#174cbc,#204aba,#3049b8,#4346b6,#5644b3,#6742b0,#7642af)"></i><i style="left:44px;top:254px;width:22px;background:linear-gradient(90deg,#164dbc,#164cbb,#1a4aba,#2548b8,#3846b6,#4d44b4,#6142b1,#7241af)"></i><i style="left:45px;top:255px;width:19px;background:linear-gradient(90deg,#174bba,#1849b9,#1e47b7,#2d46b5,#4144b4,#5542b2,#6841b0)"></i><i style="left:46px;top:256px;width:16px;background:linear-gradient(90deg,#1849b8,#1b46b6,#2444b4,#3543b3,#4942b2,#5d41b1)"></i><i style="left:46px;top:257px;width:15px;background:linear-gradient(90deg,#1947b7,#1c45b4,#2442b2,#3241b1,#4541b1,#5840b0)"></i><i style="left:48px;top:258px;width:11px;background:linear-gradient(90deg,#1d43b3,#2240b0,#2c3eae,#3b3eae,#4c3faf)"></i><i style="left:49px;top:259px;width:8px;background:linear-gradient(90deg,#2040b0,#273dad,#323cac,#403cac)"></i><i style="left:50px;top:260px;width:6px;background:linear-gradient(90deg,#243dad,#2d3aaa,#3c3aaa)"></i></div>
<svg style="position:absolute;left:0;top:0" width="1414" height="712"><defs><clipPath id="lc"><path d="M833.36 410.58 L833.34 410.58 L833.29 410.61 L833.25 410.61 L833.18 410.64 L833.11 410.64 L833.02 410.64 L832.91 410.64 L832.76 410.55 L832.51 410.34 L832.20 410.35 L831.75 410.18 L831.19 409.83 L830.46 409.30 L829.45 408.44 L828.20 407.25 L826.64 405.47 L826.30 404.99 L825.94 404.46 L825.56 403.86 L825.17 403.19 L824.74 402.43 L824.29 401.58 L823.81 400.63 L823.30 399.57 L822.76 398.40 L822.20 397.11 L821.61 395.70 L820.99 394.14 L820.34 392.44 L819.67 390.56 L818.96 388.49 L818.22 386.21 L817.45 383.72 L816.64 381.00 L815.78 378.04 L814.88 374.84 L813.93 371.36 L812.94 367.62 L811.92 363.59 L810.88 359.26 L809.83 354.61 L808.79 349.64 L807.75 344.35 L806.71 338.74 L805.67 332.81 L804.63 326.57 L803.60 320.02 L802.59 313.20 L801.60 306.16 L800.65 298.93 L799.75 291.56 L798.91 284.10 L798.14 276.58 L797.45 269.06 L796.84 261.58 L796.33 254.18 L795.92 246.91 L795.61 239.79 L795.41 232.84 L795.33 226.09 L795.37 219.56 L795.54 213.27 L795.85 207.26 L796.30 201.55 L796.88 196.18 L797.60 191.19 L798.47 186.61 L799.47 182.45 L800.60 178.76 L801.84 175.53 L803.18 172.81 L804.62 170.60 L806.14 168.88 L807.74 167.61 L809.39 166.77 L811.08 166.33 L812.82 166.24 L814.58 166.47 L816.37 166.97 L818.17 167.69 L819.99 168.59 L821.81 169.62 L823.64 170.76 L825.45 171.98 L827.25 173.28 L829.03 174.63 L830.78 176.00 L832.50 177.42 L834.21 178.86 L835.89 180.34 L837.56 181.85 L839.21 183.40 L840.85 184.99 L842.49 186.62 L844.12 188.28 L845.75 189.97 L847.37 191.70 L848.99 193.45 L850.61 195.24 L852.22 197.05 L853.83 198.89 L855.43 200.76 L857.03 202.64 L858.63 204.54 L860.22 206.47 L861.82 208.41 L863.41 210.37 L865.00 212.34 L866.60 214.33 L868.19 216.33 L869.79 218.34 L871.38 220.37 L872.98 222.41 L874.58 224.45 L876.18 226.51 L877.78 228.57 L879.37 230.64 L880.96 232.72 L882.55 234.79 L884.14 236.87 L885.72 238.95 L887.31 241.03 L888.89 243.11 L890.47 245.19 L892.05 247.26 L893.62 249.33 L895.19 251.40 L896.74 253.46 L898.29 255.51 L899.84 257.56 L901.37 259.59 L902.89 261.62 L904.41 263.63 L905.91 265.63 L907.41 267.61 L908.89 269.59 L910.36 271.54 L911.82 273.48 L913.26 275.39 L914.69 277.29 L916.10 279.16 L917.49 281.01 L918.87 282.83 L920.23 284.63 L921.57 286.40 L922.88 288.14 L924.18 289.86 L925.45 291.55 L926.69 293.21 L927.89 294.82 L929.07 296.38 L930.20 297.89 L931.31 299.36 L932.38 300.78 L933.43 302.16 L934.45 303.52 L935.45 304.85 L936.42 306.14 L937.37 307.40 L938.29 308.62 L939.18 309.79 L940.03 310.92 L940.85 311.99 L941.63 313.02 L942.38 314.01 L943.11 314.97 L943.80 315.89 L944.47 316.77 L945.10 317.62 L945.71 318.44 L946.30 319.22 L946.86 319.97 L947.39 320.68 L947.89 321.35 L948.38 322.00 L948.84 322.61 L949.29 323.20 L949.71 323.76 L950.12 324.29 L950.50 324.80 L950.87 325.29 L951.23 325.76 L951.57 326.21 L951.89 326.64 L952.20 327.06 L952.50 327.46 L952.79 327.85 L953.08 328.22 L953.35 328.59 L953.61 328.94 L953.86 329.27 L954.11 329.60 L954.34 329.91 L954.56 330.21 L954.78 330.49 L954.98 330.76 L955.87 331.92 L956.54 332.81 L957.06 333.50 L957.44 334.00 L957.68 334.33 L957.88 334.60 L958.04 334.80 L958.19 335.01 L958.33 335.19 L958.42 335.31 L958.46 335.37 L958.49 335.40 Z"/></clipPath><filter id="lb" x="-20%" y="-50%" width="140%" height="200%"><feGaussianBlur stdDeviation="0.6"/></filter></defs><g stroke="#ffffff" stroke-opacity="0.36" stroke-width="1" shape-rendering="crispEdges" clip-path="url(#lc)"><line x1="794.50" y1="146.64" x2="794.50" y2="414.30"/><line x1="794" y1="414.30" x2="996" y2="414.30"/><line x1="817.50" y1="146.64" x2="817.50" y2="414.30"/><line x1="794" y1="384.56" x2="996" y2="384.56"/><line x1="839.50" y1="146.64" x2="839.50" y2="414.30"/><line x1="794" y1="354.82" x2="996" y2="354.82"/><line x1="861.50" y1="146.64" x2="861.50" y2="414.30"/><line x1="794" y1="325.08" x2="996" y2="325.08"/><line x1="884.50" y1="146.64" x2="884.50" y2="414.30"/><line x1="794" y1="295.34" x2="996" y2="295.34"/><line x1="906.50" y1="146.64" x2="906.50" y2="414.30"/><line x1="794" y1="265.60" x2="996" y2="265.60"/><line x1="928.50" y1="146.64" x2="928.50" y2="414.30"/><line x1="794" y1="235.86" x2="996" y2="235.86"/><line x1="951.50" y1="146.64" x2="951.50" y2="414.30"/><line x1="794" y1="206.12" x2="996" y2="206.12"/><line x1="973.50" y1="146.64" x2="973.50" y2="414.30"/><line x1="794" y1="176.38" x2="996" y2="176.38"/><line x1="995.50" y1="146.64" x2="995.50" y2="414.30"/><line x1="794" y1="146.64" x2="996" y2="146.64"/></g><g font-family="Liberation Sans" font-size="6" font-weight="bold" fill="#e8e8e8"><text x="794.5" y="423.5" text-anchor="middle">0.0</text><text x="792.3" y="416.6" text-anchor="end">0.0</text><text x="817.5" y="423.5" text-anchor="middle">0.1</text><text x="792.3" y="386.9" text-anchor="end">0.1</text><text x="839.5" y="423.5" text-anchor="middle">0.2</text><text x="792.3" y="357.1" text-anchor="end">0.2</text><text x="861.5" y="423.5" text-anchor="middle">0.3</text><text x="792.3" y="327.4" text-anchor="end">0.3</text><text x="884.5" y="423.5" text-anchor="middle">0.4</text><text x="792.3" y="297.6" text-anchor="end">0.4</text><text x="906.5" y="423.5" text-anchor="middle">0.5</text><text x="792.3" y="267.9" text-anchor="end">0.5</text><text x="928.5" y="423.5" text-anchor="middle">0.6</text><text x="792.3" y="238.2" text-anchor="end">0.6</text><text x="951.5" y="423.5" text-anchor="middle">0.7</text><text x="792.3" y="208.4" text-anchor="end">0.7</text><text x="973.5" y="423.5" text-anchor="middle">0.8</text><text x="792.3" y="178.7" text-anchor="end">0.8</text><text x="995.5" y="423.5" text-anchor="middle">0.9</text><text x="792.3" y="148.9" text-anchor="end">0.9</text><text x="788.5" y="136">y</text><text x="1003.5" y="416">x</text></g><g font-family="Liberation Sans" font-size="6" font-weight="bold" fill="#2a5a8a" opacity="0.9" filter="url(#lb)"><text x="810.8" y="160.2" text-anchor="middle">510</text><text x="852.0" y="184.2" text-anchor="middle">520</text><text x="879.0" y="223.0" text-anchor="middle">540</text><text x="915.0" y="264.0" text-anchor="middle">560</text><text x="944.0" y="301.0" text-anchor="middle">580</text><text x="957.0" y="319.0" text-anchor="middle">600</text><text x="968.0" y="332.0" text-anchor="middle">700</text><text x="800.0" y="256.0" text-anchor="middle">500</text><text x="800.0" y="333.0" text-anchor="middle">490</text><text x="805.0" y="379.0" text-anchor="middle">480</text><text x="812.0" y="402.0" text-anchor="middle">470</text><text x="821.0" y="413.0" text-anchor="middle">460</text><text x="829.0" y="420.0" text-anchor="middle">380</text></g><circle cx="864.4" cy="317.6" r="4.6" fill="#5a0c14" stroke="#2a0508" stroke-width="0.8"/><path d="M864.4 314 V321.2 M861.2 317.6 H867.6" stroke="#d08890" stroke-width="0.9"/></svg><!--/CHART-->
</body></html>
